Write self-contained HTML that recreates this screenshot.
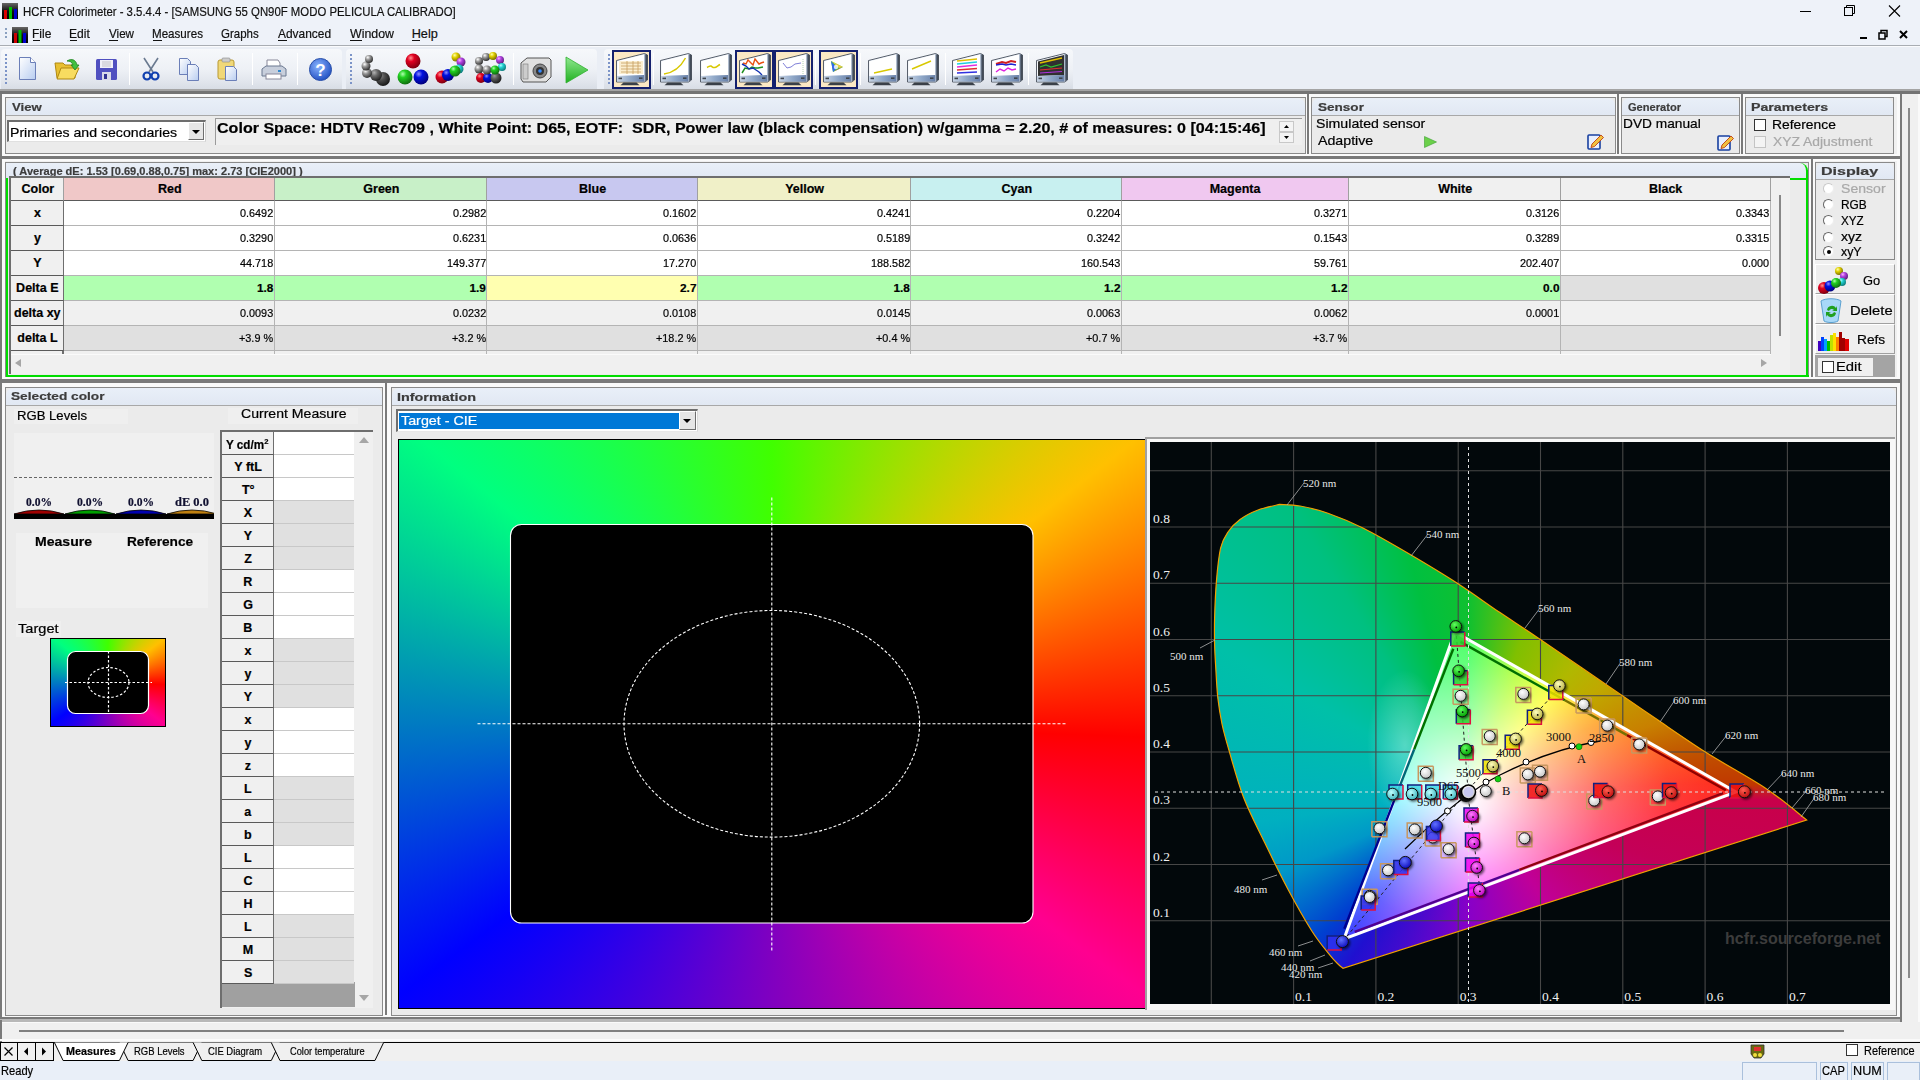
<!DOCTYPE html>
<html><head><meta charset="utf-8">
<style>
*{margin:0;padding:0;box-sizing:border-box}
html,body{width:1920px;height:1080px;overflow:hidden}
body{background:#f0f0f0;font-family:"Liberation Sans",sans-serif;font-size:12px;color:#000;position:relative}
.a{position:absolute}
.t{position:absolute;white-space:nowrap;line-height:1;-webkit-text-stroke:0.2px currentColor}
.ser{font-family:"Liberation Serif",serif}
.hdr{position:absolute;background:linear-gradient(#e9eff8,#e1e8f3);border-bottom:1px solid #a8a8a8;border-radius:7px 7px 0 0;font-weight:bold;color:#3a3a3a;font-size:11.5px}
.pan{position:absolute;border:1px solid #8a8a8a;background:#ebebeb}
.ico{position:absolute}
.sep{position:absolute;width:1px;background:#c5cad2;border-right:1px solid #fff}
</style></head><body>
<div class="a" style="left:0;top:0;width:1920px;height:46px;background:#eef2f9"></div>
<div class="a" style="left:0;top:46px;width:1920px;height:44px;background:#eaeef5;border-top:1px solid #fafbfd"></div>
<svg class="ico" style="left:2px;top:3px" width="17" height="17" viewBox="0 0 17 17"><defs><linearGradient id="tg" x1="0" y1="0" x2="0" y2="1"><stop offset="0" stop-color="#666"/><stop offset="0.5" stop-color="#111"/><stop offset="1" stop-color="#000"/></linearGradient></defs><rect x="0" y="0" width="16" height="16" fill="url(#tg)"/><rect x="2" y="7" width="3" height="9" fill="#d00"/><rect x="7" y="4" width="3" height="12" fill="#0b0"/><rect x="12" y="6" width="3" height="10" fill="#00c"/></svg>
<div class="t" style="left:22.84px;top:4.82px;font-size:13.2px;color:#111;transform:scaleX(0.8621);transform-origin:0 0">HCFR Colorimeter - 3.5.4.4 - [SAMSUNG 55 QN90F MODO PELICULA CALIBRADO]</div>
<svg class="ico" style="left:1798px;top:4px" width="110" height="14" viewBox="0 0 110 14"><path d="M2 7.5h11" stroke="#000" stroke-width="1"/><rect x="46.5" y="3.5" width="8" height="8" fill="none" stroke="#000"/><path d="M48.5 3.5v-2h8v8h-2" fill="none" stroke="#000"/><path d="M91 1.5l11 11M102 1.5l-11 11" stroke="#000" stroke-width="1.1"/></svg>
<div class="a" style="left:0;top:45px;width:1920px;height:1px;background:#a9adb3"></div>
<div class="a" style="left:5px;top:28px;width:2px;height:11px;background:repeating-linear-gradient(#8aa0c0 0 2px,transparent 2px 4px)"></div>
<svg class="ico" style="left:12px;top:27px" width="16" height="16" viewBox="0 0 16 16"><rect x="0" y="0" width="16" height="16" fill="url(#tg)"/><rect x="2" y="6" width="3" height="10" fill="#c00"/><rect x="6.5" y="3" width="3" height="13" fill="#0b0"/><rect x="11" y="6" width="3" height="10" fill="#00c"/></svg>
<div class="t" style="left:32.14px;top:28.24px;font-size:12.7px;color:#111;transform:scaleX(0.9459);transform-origin:0 0">File</div>
<div class="a" style="left:32.6px;top:40px;width:7.2px;height:1px;background:#111"></div>
<div class="t" style="left:69.03px;top:28.24px;font-size:12.7px;color:#111;transform:scaleX(0.9511);transform-origin:0 0">Edit</div>
<div class="a" style="left:69.5px;top:40px;width:7.9px;height:1px;background:#111"></div>
<div class="t" style="left:108.94px;top:28.24px;font-size:12.7px;color:#111;transform:scaleX(0.9177);transform-origin:0 0">View</div>
<div class="a" style="left:108.5px;top:40px;width:9.4px;height:1px;background:#111"></div>
<div class="t" style="left:152.17px;top:28.24px;font-size:12.7px;color:#111;transform:scaleX(0.9145);transform-origin:0 0">Measures</div>
<div class="a" style="left:152.6px;top:40px;width:9.5px;height:1px;background:#111"></div>
<div class="t" style="left:221.43px;top:28.24px;font-size:12.7px;color:#111;transform:scaleX(0.9045);transform-origin:0 0">Graphs</div>
<div class="a" style="left:221.5px;top:40px;width:9.3px;height:1px;background:#111"></div>
<div class="t" style="left:278.30px;top:28.24px;font-size:12.7px;color:#111;transform:scaleX(0.9409);transform-origin:0 0">Advanced</div>
<div class="a" style="left:277.8px;top:40px;width:9.4px;height:1px;background:#111"></div>
<div class="t" style="left:349.94px;top:28.24px;font-size:12.7px;color:#111;transform:scaleX(0.9746);transform-origin:0 0">Window</div>
<div class="a" style="left:349.5px;top:40px;width:12.9px;height:1px;background:#111"></div>
<div class="t" style="left:411.68px;top:28.24px;font-size:12.7px;color:#111">Help</div>
<div class="a" style="left:412.2px;top:40px;width:8.1px;height:1px;background:#111"></div>
<svg class="ico" style="left:1858px;top:29px" width="60" height="12" viewBox="0 0 60 12"><rect x="2" y="8" width="7" height="2" fill="#000"/><rect x="21" y="4" width="6" height="6" fill="none" stroke="#000" stroke-width="1.5"/><path d="M23 4v-2.5h6v6h-2" fill="none" stroke="#000" stroke-width="1.5"/><path d="M42 2l7 7M49 2l-7 7" stroke="#000" stroke-width="2"/></svg>
<div class="a" style="left:1px;top:49px;width:341px;height:40px;border-radius:4px 4px 0 0;background:linear-gradient(#f6f8fb,#eef1f6 50%,#e2e6ed 80%,#d8dde5)"></div>
<div class="a" style="left:346px;top:49px;width:251px;height:40px;border-radius:4px 4px 0 0;background:linear-gradient(#f6f8fb,#eef1f6 50%,#e2e6ed 80%,#d8dde5)"></div>
<div class="a" style="left:604px;top:49px;width:469px;height:40px;border-radius:4px 4px 0 0;background:linear-gradient(#f6f8fb,#eef1f6 50%,#e2e6ed 80%,#d8dde5)"></div>
<div class="a" style="left:5px;top:54px;width:2px;height:30px;background:repeating-linear-gradient(#7c94c8 0 2px,transparent 2px 4px)"></div>
<div class="a" style="left:350px;top:54px;width:2px;height:30px;background:repeating-linear-gradient(#7c94c8 0 2px,transparent 2px 4px)"></div>
<div class="a" style="left:608px;top:54px;width:2px;height:30px;background:repeating-linear-gradient(#7c94c8 0 2px,transparent 2px 4px)"></div>
<div class="sep" style="left:129px;top:53px;height:32px"></div>
<div class="sep" style="left:252px;top:53px;height:32px"></div>
<div class="sep" style="left:297px;top:53px;height:32px"></div>
<div class="sep" style="left:513px;top:53px;height:32px"></div>
<div class="sep" style="left:653px;top:53px;height:32px"></div>
<div class="sep" style="left:815px;top:53px;height:32px"></div>
<div class="sep" style="left:860px;top:53px;height:32px"></div>
<div class="sep" style="left:945px;top:53px;height:32px"></div>
<div class="sep" style="left:1028px;top:53px;height:32px"></div>
<div class="a" style="left:0;top:89px;width:1920px;height:2px;background:#a4a4a4"></div>
<div class="a" style="left:0;top:91px;width:1920px;height:3px;background:#747474"></div><svg width="0" height="0" style="position:absolute"><defs>
<radialGradient id="bR" cx="0.35" cy="0.3" r="0.7"><stop offset="0" stop-color="#ff9090"/><stop offset="0.35" stop-color="#e00020"/><stop offset="1" stop-color="#800010"/></radialGradient>
<radialGradient id="bG" cx="0.35" cy="0.3" r="0.7"><stop offset="0" stop-color="#b0ffb0"/><stop offset="0.35" stop-color="#20d020"/><stop offset="1" stop-color="#107010"/></radialGradient>
<radialGradient id="bB" cx="0.35" cy="0.3" r="0.7"><stop offset="0" stop-color="#9090ff"/><stop offset="0.35" stop-color="#0010e0"/><stop offset="1" stop-color="#000080"/></radialGradient>
<radialGradient id="bK" cx="0.35" cy="0.3" r="0.7"><stop offset="0" stop-color="#fff"/><stop offset="0.4" stop-color="#999"/><stop offset="1" stop-color="#333"/></radialGradient>
<radialGradient id="bY" cx="0.35" cy="0.3" r="0.7"><stop offset="0" stop-color="#ffffb0"/><stop offset="0.4" stop-color="#e0d000"/><stop offset="1" stop-color="#807000"/></radialGradient>
<radialGradient id="bM" cx="0.35" cy="0.3" r="0.7"><stop offset="0" stop-color="#ffb0ff"/><stop offset="0.4" stop-color="#b040e0"/><stop offset="1" stop-color="#602080"/></radialGradient>
<radialGradient id="bC" cx="0.35" cy="0.3" r="0.7"><stop offset="0" stop-color="#b0ffff"/><stop offset="0.4" stop-color="#20d0d0"/><stop offset="1" stop-color="#108080"/></radialGradient>
<linearGradient id="pg" x1="0" y1="0" x2="1" y2="1"><stop offset="0" stop-color="#fff"/><stop offset="1" stop-color="#b8cdf0"/></linearGradient>
<linearGradient id="mside" x1="0" y1="0" x2="1" y2="0"><stop offset="0" stop-color="#8090a8"/><stop offset="1" stop-color="#2a3038"/></linearGradient>
<linearGradient id="mbez" x1="0" y1="0" x2="1" y2="0"><stop offset="0" stop-color="#c8d4e4"/><stop offset="0.5" stop-color="#90a8c8"/><stop offset="1" stop-color="#6880a8"/></linearGradient>
</defs></svg>
<svg class="ico" style="left:18px;top:56px" width="20" height="25" viewBox="0 0 20 25"><path d="M1.5 1.5h11l5 5v17h-16z" fill="url(#pg)" stroke="#6b7fb8"/><path d="M12.5 1.5v5h5" fill="#fff" stroke="#6b7fb8"/></svg>
<svg class="ico" style="left:54px;top:57px" width="26" height="24" viewBox="0 0 26 24"><path d="M1 6h8l2 2h10v13H3z" fill="#e8c030" stroke="#b08810"/><path d="M3 22l4-11h18l-5 11z" fill="#f8dc60" stroke="#b08810"/><path d="M13 4c5-3 9-1 10 4l2 0-4 5-4-5h2c-1-3-3-4-6-4z" fill="#40c040" stroke="#208020" stroke-width="0.8"/></svg>
<svg class="ico" style="left:95px;top:58px" width="23" height="23" viewBox="0 0 23 23"><rect x="1" y="1" width="21" height="21" rx="1.5" fill="#5050c0"/><rect x="5" y="2" width="13" height="8" fill="#f0f0f8"/><path d="M7 4h9M7 6h9M7 8h9" stroke="#aaa" stroke-width="0.6"/><rect x="7" y="14" width="9" height="8" fill="#d8d8e8"/><rect x="9" y="16" width="3" height="5" fill="#303090"/></svg>
<svg class="ico" style="left:141px;top:57px" width="20" height="25" viewBox="0 0 20 25"><path d="M3 1l9 14M17 1L8 15" stroke="#6a7a90" stroke-width="1.6"/><circle cx="6" cy="19" r="3.5" fill="none" stroke="#1040b0" stroke-width="2.2"/><circle cx="14" cy="19" r="3.5" fill="none" stroke="#1040b0" stroke-width="2.2"/></svg>
<svg class="ico" style="left:178px;top:57px" width="24" height="25" viewBox="0 0 24 25"><path d="M1.5 1.5h8l3 3v13h-11z" fill="url(#pg)" stroke="#6b7fb8"/><path d="M9.5 7.5h8l3 3v13h-11z" fill="url(#pg)" stroke="#6b7fb8"/></svg>
<svg class="ico" style="left:216px;top:57px" width="24" height="25" viewBox="0 0 24 25"><rect x="2" y="3" width="16" height="19" rx="2" fill="#f0d878" stroke="#b89830"/><rect x="6" y="1" width="8" height="4" rx="1" fill="#ccc" stroke="#888" stroke-width="0.6"/><path d="M9.5 9.5h8l3 3v11h-11z" fill="url(#pg)" stroke="#6b7fb8"/></svg>
<svg class="ico" style="left:261px;top:59px" width="26" height="22" viewBox="0 0 26 22"><path d="M6 1h11l2 3v5H6z" fill="#fff" stroke="#889"/><path d="M1 10l4-3h16l4 3v7H1z" fill="#c8cfdc" stroke="#6b7890"/><rect x="5" y="15" width="15" height="5" fill="#fff" stroke="#889"/><rect x="17" y="11" width="3" height="2" fill="#38c"/></svg>
<svg class="ico" style="left:308px;top:57px" width="25" height="25" viewBox="0 0 25 25"><defs><radialGradient id="hg" cx="0.4" cy="0.35" r="0.7"><stop offset="0" stop-color="#8ab4ff"/><stop offset="1" stop-color="#1e4cc0"/></radialGradient></defs><circle cx="12.5" cy="12.5" r="11" fill="url(#hg)" stroke="#2a50a8"/><text x="12.5" y="18.5" text-anchor="middle" font-family="Liberation Sans" font-weight="bold" font-size="17" fill="#fff">?</text></svg>
<svg class="ico" style="left:357px;top:53px" width="34" height="34" viewBox="0 0 34 34"><circle cx="26" cy="26" r="7" fill="url(#bK)" style="filter:brightness(0.5)"/><circle cx="19" cy="22" r="6" fill="url(#bK)" style="filter:brightness(0.7)"/><circle cx="10" cy="20" r="5" fill="url(#bK)"/><circle cx="9" cy="13" r="4.5" fill="url(#bK)"/><circle cx="12" cy="6" r="4" fill="url(#bK)"/></svg>
<svg class="ico" style="left:396px;top:52px" width="34" height="34" viewBox="0 0 34 34"><circle cx="17" cy="9" r="7.5" fill="url(#bR)"/><circle cx="9" cy="25" r="7.5" fill="url(#bG)"/><circle cx="25" cy="25" r="7.5" fill="url(#bB)"/></svg>
<svg class="ico" style="left:435px;top:52px" width="34" height="34" viewBox="0 0 34 34"><circle cx="21" cy="5" r="4.5" fill="url(#bY)"/><circle cx="26" cy="10" r="4.5" fill="url(#bM)"/><circle cx="24" cy="17" r="4.5" fill="url(#bC)"/><circle cx="7" cy="25" r="6.5" fill="url(#bR)"/><circle cx="13" cy="23" r="6" fill="url(#bB)"/><circle cx="20" cy="19" r="5.5" fill="url(#bG)"/></svg>
<svg class="ico" style="left:474px;top:52px" width="34" height="34" viewBox="0 0 34 34"><circle cx="12" cy="5" r="4" fill="url(#bK)"/><circle cx="19" cy="4" r="4" fill="url(#bY)"/><circle cx="26" cy="8" r="4" fill="url(#bM)"/><circle cx="28" cy="15" r="4" fill="url(#bC)"/><circle cx="5" cy="9" r="4" fill="url(#bK)"/><circle cx="5" cy="17" r="4.5" fill="url(#bK)"/><circle cx="7" cy="26" r="5" fill="url(#bR)"/><circle cx="14" cy="26" r="5" fill="url(#bB)"/><circle cx="22" cy="26" r="5.5" fill="url(#bK)" style="filter:brightness(0.6)"/><circle cx="13" cy="18" r="4.5" fill="url(#bK)"/><circle cx="21" cy="18" r="4.5" fill="url(#bG)"/></svg>
<svg class="ico" style="left:519px;top:55px" width="34" height="30" viewBox="0 0 34 30"><path d="M2 8l6-5h22l2 2v17l-5 5H4l-2-3z" fill="#e0e0e0" stroke="#555" stroke-width="1"/><rect x="4" y="9" width="5" height="15" fill="#ccc" stroke="#777" stroke-width="0.6"/><circle cx="21" cy="16" r="7" fill="#888" stroke="#444"/><circle cx="21" cy="16" r="4" fill="#333"/><circle cx="21" cy="16" r="1.8" fill="#38f"/></svg>
<svg class="ico" style="left:564px;top:55px" width="26" height="30" viewBox="0 0 26 30"><defs><linearGradient id="pl" x1="0" y1="0" x2="0" y2="1"><stop offset="0" stop-color="#90e890"/><stop offset="1" stop-color="#20b020"/></linearGradient></defs><path d="M2 2l22 13L2 28z" fill="url(#pl)" stroke="#30b030" stroke-width="0.8"/></svg>
<div class="a" style="left:612px;top:50px;width:39px;height:39px;background:#fbe8c4;border:2px solid #14206e"></div>
<svg class="ico" style="left:614px;top:52px" width="35" height="34" viewBox="0 0 35 34"><path d="M2.5 8.5L30.5 1.5L33.5 3V28L30.5 30H2.5z" fill="#dfe6f0" stroke="#48505c" stroke-width="0.9"/><path d="M30.5 1.8L33.3 3.2V27.8L30.5 29.7z" fill="url(#mside)"/><path d="M3.3 9.2L30 2.6V23L3.3 24z" fill="#fff"/><rect x="5" y="9" width="24" height="13" fill="#fbeed0"/><g stroke="#c8a060" stroke-width="0.8"><path d="M7 11h20M7 14h20M7 17h20M7 20h20M13 9v13M19 9v13M24 9v13"/></g><path d="M3 24L30.2 23V29.6H3z" fill="url(#mbez)"/><rect x="4.5" y="25.6" width="3.5" height="1.6" fill="#40464e"/><rect x="25" y="25.4" width="3.5" height="1.6" fill="#40464e"/><path d="M6.5 33.3L9.5 30.5H22.5L25.5 33.3z" fill="#3a4048"/></svg>
<svg class="ico" style="left:658px;top:52px" width="35" height="34" viewBox="0 0 35 34"><path d="M2.5 8.5L30.5 1.5L33.5 3V28L30.5 30H2.5z" fill="#dfe6f0" stroke="#48505c" stroke-width="0.9"/><path d="M30.5 1.8L33.3 3.2V27.8L30.5 29.7z" fill="url(#mside)"/><path d="M3.3 9.2L30 2.6V23L3.3 24z" fill="#fff"/><path d="M6 22Q20 20 27.5 6" fill="none" stroke="#d8c800" stroke-width="1.5"/><path d="M3 24L30.2 23V29.6H3z" fill="url(#mbez)"/><rect x="4.5" y="25.6" width="3.5" height="1.6" fill="#40464e"/><rect x="25" y="25.4" width="3.5" height="1.6" fill="#40464e"/><path d="M6.5 33.3L9.5 30.5H22.5L25.5 33.3z" fill="#3a4048"/></svg>
<svg class="ico" style="left:698px;top:52px" width="35" height="34" viewBox="0 0 35 34"><path d="M2.5 8.5L30.5 1.5L33.5 3V28L30.5 30H2.5z" fill="#dfe6f0" stroke="#48505c" stroke-width="0.9"/><path d="M30.5 1.8L33.3 3.2V27.8L30.5 29.7z" fill="url(#mside)"/><path d="M3.3 9.2L30 2.6V23L3.3 24z" fill="#fff"/><path d="M9 15.5c2-1 3-2 4-1.5s2 2 4 1.5 3-2 5-3" fill="none" stroke="#d8c800" stroke-width="1.5"/><path d="M3 24L30.2 23V29.6H3z" fill="url(#mbez)"/><rect x="4.5" y="25.6" width="3.5" height="1.6" fill="#40464e"/><rect x="25" y="25.4" width="3.5" height="1.6" fill="#40464e"/><path d="M6.5 33.3L9.5 30.5H22.5L25.5 33.3z" fill="#3a4048"/></svg>
<div class="a" style="left:735px;top:50px;width:39px;height:39px;background:#fbe8c4;border:2px solid #14206e"></div>
<svg class="ico" style="left:737px;top:52px" width="35" height="34" viewBox="0 0 35 34"><path d="M2.5 8.5L30.5 1.5L33.5 3V28L30.5 30H2.5z" fill="#dfe6f0" stroke="#48505c" stroke-width="0.9"/><path d="M30.5 1.8L33.3 3.2V27.8L30.5 29.7z" fill="url(#mside)"/><path d="M3.3 9.2L30 2.6V23L3.3 24z" fill="#fff"/><path d="M6 11l3 1 2-4 3 3 2 2 2-6 4 5 2-1 3-1" fill="none" stroke="#e85010" stroke-width="1.4"/><path d="M5 21l3-5 4 1 3-2 3 1 3 0 5-1" fill="none" stroke="#209020" stroke-width="1.5"/><path d="M5 12l4 2 3 3 4-1 3 2 3 2 3 3" fill="none" stroke="#1030b0" stroke-width="1.4"/><path d="M3 24L30.2 23V29.6H3z" fill="url(#mbez)"/><rect x="4.5" y="25.6" width="3.5" height="1.6" fill="#40464e"/><rect x="25" y="25.4" width="3.5" height="1.6" fill="#40464e"/><path d="M6.5 33.3L9.5 30.5H22.5L25.5 33.3z" fill="#3a4048"/></svg>
<div class="a" style="left:774px;top:50px;width:39px;height:39px;background:#fbe8c4;border:2px solid #14206e"></div>
<svg class="ico" style="left:776px;top:52px" width="35" height="34" viewBox="0 0 35 34"><path d="M2.5 8.5L30.5 1.5L33.5 3V28L30.5 30H2.5z" fill="#dfe6f0" stroke="#48505c" stroke-width="0.9"/><path d="M30.5 1.8L33.3 3.2V27.8L30.5 29.7z" fill="url(#mside)"/><path d="M3.3 9.2L30 2.6V23L3.3 24z" fill="#fff"/><path d="M7 11l4 5 4-1 4-3 6-1" fill="none" stroke="#8080d8" stroke-width="1"/><path d="M27 7v15" stroke="#a0c8a0" stroke-width="0.8" stroke-dasharray="1 1"/><path d="M3 24L30.2 23V29.6H3z" fill="url(#mbez)"/><rect x="4.5" y="25.6" width="3.5" height="1.6" fill="#40464e"/><rect x="25" y="25.4" width="3.5" height="1.6" fill="#40464e"/><path d="M6.5 33.3L9.5 30.5H22.5L25.5 33.3z" fill="#3a4048"/></svg>
<div class="a" style="left:819px;top:50px;width:39px;height:39px;background:#fbe8c4;border:2px solid #14206e"></div>
<svg class="ico" style="left:821px;top:52px" width="35" height="34" viewBox="0 0 35 34"><path d="M2.5 8.5L30.5 1.5L33.5 3V28L30.5 30H2.5z" fill="#dfe6f0" stroke="#48505c" stroke-width="0.9"/><path d="M30.5 1.8L33.3 3.2V27.8L30.5 29.7z" fill="url(#mside)"/><path d="M3.3 9.2L30 2.6V23L3.3 24z" fill="#fff"/><path d="M10 9l12 6-10 5z" fill="#4c4"/><path d="M10 9l12 6-4 1z" fill="#ec4"/><path d="M12 20l10-5-5 2z" fill="#e33"/><path d="M10 9l2 11 4-4z" fill="#36e"/><circle cx="15" cy="15" r="2.2" fill="#fff" opacity="0.8"/><path d="M3 24L30.2 23V29.6H3z" fill="url(#mbez)"/><rect x="4.5" y="25.6" width="3.5" height="1.6" fill="#40464e"/><rect x="25" y="25.4" width="3.5" height="1.6" fill="#40464e"/><path d="M6.5 33.3L9.5 30.5H22.5L25.5 33.3z" fill="#3a4048"/></svg>
<svg class="ico" style="left:866px;top:52px" width="35" height="34" viewBox="0 0 35 34"><path d="M2.5 8.5L30.5 1.5L33.5 3V28L30.5 30H2.5z" fill="#dfe6f0" stroke="#48505c" stroke-width="0.9"/><path d="M30.5 1.8L33.3 3.2V27.8L30.5 29.7z" fill="url(#mside)"/><path d="M3.3 9.2L30 2.6V23L3.3 24z" fill="#fff"/><path d="M8 21l18-4" fill="none" stroke="#d8c800" stroke-width="1.4"/><path d="M3 24L30.2 23V29.6H3z" fill="url(#mbez)"/><rect x="4.5" y="25.6" width="3.5" height="1.6" fill="#40464e"/><rect x="25" y="25.4" width="3.5" height="1.6" fill="#40464e"/><path d="M6.5 33.3L9.5 30.5H22.5L25.5 33.3z" fill="#3a4048"/></svg>
<svg class="ico" style="left:905px;top:52px" width="35" height="34" viewBox="0 0 35 34"><path d="M2.5 8.5L30.5 1.5L33.5 3V28L30.5 30H2.5z" fill="#dfe6f0" stroke="#48505c" stroke-width="0.9"/><path d="M30.5 1.8L33.3 3.2V27.8L30.5 29.7z" fill="url(#mside)"/><path d="M3.3 9.2L30 2.6V23L3.3 24z" fill="#fff"/><path d="M7 17l19-8" fill="none" stroke="#d8c800" stroke-width="1.4"/><path d="M3 24L30.2 23V29.6H3z" fill="url(#mbez)"/><rect x="4.5" y="25.6" width="3.5" height="1.6" fill="#40464e"/><rect x="25" y="25.4" width="3.5" height="1.6" fill="#40464e"/><path d="M6.5 33.3L9.5 30.5H22.5L25.5 33.3z" fill="#3a4048"/></svg>
<svg class="ico" style="left:950px;top:52px" width="35" height="34" viewBox="0 0 35 34"><path d="M2.5 8.5L30.5 1.5L33.5 3V28L30.5 30H2.5z" fill="#dfe6f0" stroke="#48505c" stroke-width="0.9"/><path d="M30.5 1.8L33.3 3.2V27.8L30.5 29.7z" fill="url(#mside)"/><path d="M3.3 9.2L30 2.6V23L3.3 24z" fill="#fff"/><path d="M7 9l20-2" stroke="#e0c000" stroke-width="1.3"/><path d="M7 12l20-2" stroke="#20d0e0" stroke-width="1.3"/><path d="M7 15l20-2" stroke="#e030e0" stroke-width="1.3"/><path d="M7 18l20-1.5" stroke="#e03030" stroke-width="1.3"/><path d="M7 21l20-1" stroke="#3030e0" stroke-width="1.3"/><path d="M3 24L30.2 23V29.6H3z" fill="url(#mbez)"/><rect x="4.5" y="25.6" width="3.5" height="1.6" fill="#40464e"/><rect x="25" y="25.4" width="3.5" height="1.6" fill="#40464e"/><path d="M6.5 33.3L9.5 30.5H22.5L25.5 33.3z" fill="#3a4048"/></svg>
<svg class="ico" style="left:989px;top:52px" width="35" height="34" viewBox="0 0 35 34"><path d="M2.5 8.5L30.5 1.5L33.5 3V28L30.5 30H2.5z" fill="#dfe6f0" stroke="#48505c" stroke-width="0.9"/><path d="M30.5 1.8L33.3 3.2V27.8L30.5 29.7z" fill="url(#mside)"/><path d="M3.3 9.2L30 2.6V23L3.3 24z" fill="#fff"/><path d="M7 12l6-2 4 1 5-2 5 1" fill="none" stroke="#d02020" stroke-width="2"/><path d="M7 13l6-1 4 1 5-1 5 1" fill="none" stroke="#2020d0" stroke-width="1.3"/><path d="M7 20l4-3 4 2 4-3 4 2 4-1" fill="none" stroke="#e020e0" stroke-width="1.4"/><path d="M3 24L30.2 23V29.6H3z" fill="url(#mbez)"/><rect x="4.5" y="25.6" width="3.5" height="1.6" fill="#40464e"/><rect x="25" y="25.4" width="3.5" height="1.6" fill="#40464e"/><path d="M6.5 33.3L9.5 30.5H22.5L25.5 33.3z" fill="#3a4048"/></svg>
<svg class="ico" style="left:1034px;top:52px" width="35" height="34" viewBox="0 0 35 34"><path d="M2.5 8.5L30.5 1.5L33.5 3V28L30.5 30H2.5z" fill="#dfe6f0" stroke="#48505c" stroke-width="0.9"/><path d="M30.5 1.8L33.3 3.2V27.8L30.5 29.7z" fill="url(#mside)"/><path d="M3.3 9.2L30 2.6V23L3.3 24z" fill="#fff"/><path d="M4 9.5L30 3V23L4 24z" fill="#303030"/><path d="M6 11l22-5" stroke="#e0c000" stroke-width="1.3"/><path d="M6 15l6-2 5 2 11-3" fill="none" stroke="#30c030" stroke-width="1.2"/><path d="M6 18l22-2" stroke="#e03030" stroke-width="1.1"/><path d="M6 21l22-1.5" stroke="#b030e0" stroke-width="1.1"/><path d="M3 24L30.2 23V29.6H3z" fill="url(#mbez)"/><rect x="4.5" y="25.6" width="3.5" height="1.6" fill="#40464e"/><rect x="25" y="25.4" width="3.5" height="1.6" fill="#40464e"/><path d="M6.5 33.3L9.5 30.5H22.5L25.5 33.3z" fill="#3a4048"/></svg><div class="a" style="left:0;top:94px;width:2px;height:948px;background:#7a7a7a"></div>
<div class="a" style="left:2px;top:94px;width:3px;height:926px;background:#fafafa"></div>
<div class="a" style="left:1897px;top:94px;width:23px;height:926px;background:#f0f0f0"></div>
<div class="a" style="left:1899px;top:94px;width:3px;height:928px;background:#7a7a7a"></div>
<div class="a" style="left:1897px;top:94px;width:3px;height:926px;background:#fafafa"></div>
<div class="a" style="left:1908px;top:108px;width:2px;height:870px;background:#8a8a8a"></div>
<div class="a" style="left:1918px;top:94px;width:2px;height:947px;background:#fafafa"></div>
<div class="a" style="left:2px;top:94px;width:1898px;height:3px;background:#fafafa"></div>
<div class="pan" style="left:5px;top:97px;width:1301px;height:57px"></div>
<div class="hdr" style="left:6px;top:98px;width:1299px;height:18px"></div>
<div class="t" style="left:11.93px;top:102.23px;font-size:11.3px;font-weight:bold;color:#3c3c3c;transform:scaleX(1.1630);transform-origin:0 0">View</div>
<div class="a" style="left:7px;top:120px;width:199px;height:22px;background:#fff;border-top:2px solid #6e6e6e;border-left:2px solid #6e6e6e;border-right:1px solid #d0d0d0;border-bottom:1px solid #e0e0e0"></div>
<div class="t" style="left:9.87px;top:127.06px;font-size:12.8px;color:#000;transform:scaleX(1.1027);transform-origin:0 0">Primaries and secondaries</div>
<div class="a" style="left:188px;top:122px;width:16px;height:18px;background:#e6e6e6;border:1px solid;border-color:#fff #6e6e6e #6e6e6e #fff"></div>
<svg class="ico" style="left:192px;top:130px" width="9" height="5"><path d="M0 0h8l-4 4z" fill="#000"/></svg>
<div class="a" style="left:215px;top:118px;width:1087px;height:27px;background:#efefef;border-top:1px solid #9a9a9a;border-left:1px solid #9a9a9a"></div>
<div class="t" style="left:216.96px;top:119.91px;font-size:15.1px;font-weight:bold;color:#000;transform:scaleX(1.0643);transform-origin:0 0">Color Space: HDTV Rec709 , White Point: D65, EOTF:&nbsp; SDR, Power law (black compensation) w/gamma = 2.20, # of measures: 0 [04:15:46]</div>
<svg class="ico" style="left:1279px;top:121px" width="15" height="22"><rect x="0.5" y="0.5" width="14" height="10" fill="#f4f4f4" stroke="#c8c8c8"/><rect x="0.5" y="11.5" width="14" height="10" fill="#f4f4f4" stroke="#c8c8c8"/><path d="M5 7h5l-2.5-3z" fill="#000"/><path d="M5 15h5l-2.5 3z" fill="#000"/></svg>
<div class="a" style="left:1306px;top:94px;width:5px;height:63px;background:#fafafa"></div>
<div class="a" style="left:1307px;top:94px;width:2px;height:63px;background:#7a7a7a"></div>
<div class="a" style="left:1616px;top:94px;width:5px;height:63px;background:#fafafa"></div>
<div class="a" style="left:1617px;top:94px;width:2px;height:63px;background:#7a7a7a"></div>
<div class="a" style="left:1740px;top:94px;width:5px;height:63px;background:#fafafa"></div>
<div class="a" style="left:1741px;top:94px;width:2px;height:63px;background:#7a7a7a"></div>
<div class="pan" style="left:1311px;top:97px;width:305px;height:57px"></div>
<div class="hdr" style="left:1312px;top:98px;width:303px;height:18px"></div>
<div class="t" style="left:1317.59px;top:102.23px;font-size:11.3px;font-weight:bold;color:#3c3c3c;transform:scaleX(1.1985);transform-origin:0 0">Sensor</div>
<div class="t" style="left:1315.66px;top:118.07px;font-size:12.9px;transform:scaleX(1.0976);transform-origin:0 0">Simulated sensor</div>
<div class="t" style="left:1317.90px;top:134.87px;font-size:12.9px;transform:scaleX(1.1014);transform-origin:0 0">Adaptive</div>
<svg class="ico" style="left:1424px;top:136px" width="13" height="12"><path d="M0.5 0.5l12 5.5-12 5.5z" fill="#6bd04a" stroke="#3aa030" stroke-width="0.6"/></svg>
<svg class="ico" style="left:1586px;top:131px" width="20" height="20" viewBox="0 0 20 20"><rect x="2" y="4" width="12" height="14" rx="1" fill="#e8efff" stroke="#1840a0" stroke-width="1.6"/><path d="M6 13l9-9 2.5 2.5-9 9-3.5 1z" fill="#f0c040" stroke="#c04010" stroke-width="0.9"/></svg>
<div class="pan" style="left:1621px;top:97px;width:119px;height:57px"></div>
<div class="hdr" style="left:1622px;top:98px;width:117px;height:18px"></div>
<div class="t" style="left:1627.56px;top:102.23px;font-size:11.3px;font-weight:bold;color:#3c3c3c;transform:scaleX(0.9814);transform-origin:0 0">Generator</div>
<div class="t" style="left:1622.80px;top:118.07px;font-size:12.9px;transform:scaleX(1.0631);transform-origin:0 0">DVD manual</div>
<svg class="ico" style="left:1716px;top:132px" width="20" height="20" viewBox="0 0 20 20"><rect x="2" y="4" width="12" height="14" rx="1" fill="#e8efff" stroke="#1840a0" stroke-width="1.6"/><path d="M6 13l9-9 2.5 2.5-9 9-3.5 1z" fill="#f0c040" stroke="#c04010" stroke-width="0.9"/></svg>
<div class="pan" style="left:1745px;top:97px;width:149px;height:57px"></div>
<div class="hdr" style="left:1746px;top:98px;width:147px;height:18px"></div>
<div class="t" style="left:1751.08px;top:102.23px;font-size:11.3px;font-weight:bold;color:#3c3c3c;transform:scaleX(1.2545);transform-origin:0 0">Parameters</div>
<div class="a" style="left:1754px;top:119px;width:12px;height:12px;background:#fff;border:1px solid #333"></div>
<div class="t" style="left:1771.79px;top:118.57px;font-size:12.9px;transform:scaleX(1.0744);transform-origin:0 0">Reference</div>
<div class="a" style="left:1754px;top:136px;width:12px;height:12px;background:#f4f4f4;border:1px solid #c4c4c4"></div>
<div class="t" style="left:1772.55px;top:135.57px;font-size:12.9px;color:#a8a8a8;transform:scaleX(1.0756);transform-origin:0 0">XYZ Adjustment</div>
<div class="a" style="left:2px;top:154px;width:1898px;height:3px;background:#fafafa"></div>
<div class="a" style="left:0;top:156px;width:1900px;height:3px;background:#787878"></div>
<div class="a" style="left:2px;top:159px;width:1898px;height:2px;background:#fafafa"></div><div class="pan" style="left:5px;top:162px;width:1804px;height:216px;background:#ebebeb;border-color:#8a8a8a"></div>
<div class="hdr" style="left:6px;top:163px;width:1802px;height:15px;border-bottom:none;border-right:2px solid #0d0;border-radius:0 8px 0 0"></div>
<div class="t" style="left:13.35px;top:166.15px;font-size:10.8px;font-weight:bold;color:#3c3c3c;transform:scaleX(1.0234);transform-origin:0 0">( Average dE: 1.53 [0.69,0.88,0.75] max: 2.73 [CIE2000] )</div>
<div class="a" style="left:6px;top:178px;width:2px;height:199px;background:#00dd00"></div>
<div class="a" style="left:6px;top:375px;width:1803px;height:2px;background:#00dd00"></div>
<div class="a" style="left:1806px;top:170px;width:2px;height:207px;background:#00dd00"></div>
<div class="a" style="left:1790px;top:178px;width:17px;height:2px;background:#00dd00"></div>
<div class="a" style="left:9px;top:176px;width:1781px;height:198px;background:#f0f0f0;border-top:2px solid #6e6e6e;border-left:2px solid #6e6e6e"></div>
<div class="a" style="left:11px;top:178px;width:53px;height:23px;background:#f0f0f0;border-right:1px solid #a0a0a0;border-bottom:1.5px solid #5a5a5a"></div>
<div class="t" style="left:21.53px;top:183.41px;font-size:12.5px;font-weight:bold;color:#000">Color</div>
<div class="a" style="left:64px;top:178px;width:210.5px;height:23px;background:#f0c8c8;border-right:1px solid #a0a0a0;border-bottom:1.5px solid #5a5a5a"></div>
<div class="t" style="left:157.94px;top:183.41px;font-size:12.5px;font-weight:bold;color:#000">Red</div>
<div class="a" style="left:274.5px;top:178px;width:212.5px;height:23px;background:#c8f0c8;border-right:1px solid #a0a0a0;border-bottom:1.5px solid #5a5a5a"></div>
<div class="t" style="left:363.31px;top:183.41px;font-size:12.5px;font-weight:bold;color:#000">Green</div>
<div class="a" style="left:487px;top:178px;width:210.5px;height:23px;background:#c8c8f0;border-right:1px solid #a0a0a0;border-bottom:1.5px solid #5a5a5a"></div>
<div class="t" style="left:579.00px;top:183.41px;font-size:12.5px;font-weight:bold;color:#000">Blue</div>
<div class="a" style="left:697.5px;top:178px;width:213.5px;height:23px;background:#f0f0c8;border-right:1px solid #a0a0a0;border-bottom:1.5px solid #5a5a5a"></div>
<div class="t" style="left:785.19px;top:183.41px;font-size:12.5px;font-weight:bold;color:#000">Yellow</div>
<div class="a" style="left:911px;top:178px;width:210.5px;height:23px;background:#c8f0f0;border-right:1px solid #a0a0a0;border-bottom:1.5px solid #5a5a5a"></div>
<div class="t" style="left:1001.59px;top:183.41px;font-size:12.5px;font-weight:bold;color:#000">Cyan</div>
<div class="a" style="left:1121.5px;top:178px;width:227.0px;height:23px;background:#f0c8f0;border-right:1px solid #a0a0a0;border-bottom:1.5px solid #5a5a5a"></div>
<div class="t" style="left:1209.69px;top:183.41px;font-size:12.5px;font-weight:bold;color:#000">Magenta</div>
<div class="a" style="left:1348.5px;top:178px;width:212.0px;height:23px;background:#f0f0f0;border-right:1px solid #a0a0a0;border-bottom:1.5px solid #5a5a5a"></div>
<div class="t" style="left:1438.19px;top:183.41px;font-size:12.5px;font-weight:bold;color:#000">White</div>
<div class="a" style="left:1560.5px;top:178px;width:210.0px;height:23px;background:#f0f0f0;border-right:1px solid #a0a0a0;border-bottom:1.5px solid #5a5a5a"></div>
<div class="t" style="left:1648.94px;top:183.41px;font-size:12.5px;font-weight:bold;color:#000">Black</div>
<div class="a" style="left:11px;top:200.5px;width:53px;height:25.0px;background:#f0f0f0;border-right:1.5px solid #6e6e6e;border-bottom:1.5px solid #5a5a5a"></div>
<div class="t" style="left:34.03px;top:207.21px;font-size:12.5px;font-weight:bold;color:#000">x</div>
<div class="a" style="left:64px;top:200.5px;width:210.5px;height:25.0px;background:#ffffff;border-right:1px solid #b4b4b4;border-bottom:1px solid #b4b4b4"></div>
<div class="t" style="left:240.32px;top:208.31px;font-size:11.8px;color:#000;transform:scaleX(0.9200);transform-origin:0 0">0.6492</div>
<div class="a" style="left:274.5px;top:200.5px;width:212.5px;height:25.0px;background:#ffffff;border-right:1px solid #b4b4b4;border-bottom:1px solid #b4b4b4"></div>
<div class="t" style="left:452.82px;top:208.31px;font-size:11.8px;color:#000;transform:scaleX(0.9200);transform-origin:0 0">0.2982</div>
<div class="a" style="left:487px;top:200.5px;width:210.5px;height:25.0px;background:#ffffff;border-right:1px solid #b4b4b4;border-bottom:1px solid #b4b4b4"></div>
<div class="t" style="left:663.32px;top:208.31px;font-size:11.8px;color:#000;transform:scaleX(0.9200);transform-origin:0 0">0.1602</div>
<div class="a" style="left:697.5px;top:200.5px;width:213.5px;height:25.0px;background:#ffffff;border-right:1px solid #b4b4b4;border-bottom:1px solid #b4b4b4"></div>
<div class="t" style="left:876.77px;top:208.31px;font-size:11.8px;color:#000;transform:scaleX(0.9200);transform-origin:0 0">0.4241</div>
<div class="a" style="left:911px;top:200.5px;width:210.5px;height:25.0px;background:#ffffff;border-right:1px solid #b4b4b4;border-bottom:1px solid #b4b4b4"></div>
<div class="t" style="left:1087.05px;top:208.31px;font-size:11.8px;color:#000;transform:scaleX(0.9200);transform-origin:0 0">0.2204</div>
<div class="a" style="left:1121.5px;top:200.5px;width:227.0px;height:25.0px;background:#ffffff;border-right:1px solid #b4b4b4;border-bottom:1px solid #b4b4b4"></div>
<div class="t" style="left:1314.27px;top:208.31px;font-size:11.8px;color:#000;transform:scaleX(0.9200);transform-origin:0 0">0.3271</div>
<div class="a" style="left:1348.5px;top:200.5px;width:212.0px;height:25.0px;background:#ffffff;border-right:1px solid #b4b4b4;border-bottom:1px solid #b4b4b4"></div>
<div class="t" style="left:1526.21px;top:208.31px;font-size:11.8px;color:#000;transform:scaleX(0.9200);transform-origin:0 0">0.3126</div>
<div class="a" style="left:1560.5px;top:200.5px;width:210.0px;height:25.0px;background:#ffffff;border-right:1px solid #b4b4b4;border-bottom:1px solid #b4b4b4"></div>
<div class="t" style="left:1736.21px;top:208.31px;font-size:11.8px;color:#000;transform:scaleX(0.9200);transform-origin:0 0">0.3343</div>
<div class="a" style="left:11px;top:225.5px;width:53px;height:25.0px;background:#f0f0f0;border-right:1.5px solid #6e6e6e;border-bottom:1.5px solid #5a5a5a"></div>
<div class="t" style="left:34.03px;top:232.21px;font-size:12.5px;font-weight:bold;color:#000">y</div>
<div class="a" style="left:64px;top:225.5px;width:210.5px;height:25.0px;background:#ffffff;border-right:1px solid #b4b4b4;border-bottom:1px solid #b4b4b4"></div>
<div class="t" style="left:240.16px;top:233.31px;font-size:11.8px;color:#000;transform:scaleX(0.9200);transform-origin:0 0">0.3290</div>
<div class="a" style="left:274.5px;top:225.5px;width:212.5px;height:25.0px;background:#ffffff;border-right:1px solid #b4b4b4;border-bottom:1px solid #b4b4b4"></div>
<div class="t" style="left:452.77px;top:233.31px;font-size:11.8px;color:#000;transform:scaleX(0.9200);transform-origin:0 0">0.6231</div>
<div class="a" style="left:487px;top:225.5px;width:210.5px;height:25.0px;background:#ffffff;border-right:1px solid #b4b4b4;border-bottom:1px solid #b4b4b4"></div>
<div class="t" style="left:663.21px;top:233.31px;font-size:11.8px;color:#000;transform:scaleX(0.9200);transform-origin:0 0">0.0636</div>
<div class="a" style="left:697.5px;top:225.5px;width:213.5px;height:25.0px;background:#ffffff;border-right:1px solid #b4b4b4;border-bottom:1px solid #b4b4b4"></div>
<div class="t" style="left:876.77px;top:233.31px;font-size:11.8px;color:#000;transform:scaleX(0.9200);transform-origin:0 0">0.5189</div>
<div class="a" style="left:911px;top:225.5px;width:210.5px;height:25.0px;background:#ffffff;border-right:1px solid #b4b4b4;border-bottom:1px solid #b4b4b4"></div>
<div class="t" style="left:1087.32px;top:233.31px;font-size:11.8px;color:#000;transform:scaleX(0.9200);transform-origin:0 0">0.3242</div>
<div class="a" style="left:1121.5px;top:225.5px;width:227.0px;height:25.0px;background:#ffffff;border-right:1px solid #b4b4b4;border-bottom:1px solid #b4b4b4"></div>
<div class="t" style="left:1314.21px;top:233.31px;font-size:11.8px;color:#000;transform:scaleX(0.9200);transform-origin:0 0">0.1543</div>
<div class="a" style="left:1348.5px;top:225.5px;width:212.0px;height:25.0px;background:#ffffff;border-right:1px solid #b4b4b4;border-bottom:1px solid #b4b4b4"></div>
<div class="t" style="left:1526.27px;top:233.31px;font-size:11.8px;color:#000;transform:scaleX(0.9200);transform-origin:0 0">0.3289</div>
<div class="a" style="left:1560.5px;top:225.5px;width:210.0px;height:25.0px;background:#ffffff;border-right:1px solid #b4b4b4;border-bottom:1px solid #b4b4b4"></div>
<div class="t" style="left:1736.21px;top:233.31px;font-size:11.8px;color:#000;transform:scaleX(0.9200);transform-origin:0 0">0.3315</div>
<div class="a" style="left:11px;top:250.5px;width:53px;height:25.0px;background:#f0f0f0;border-right:1.5px solid #6e6e6e;border-bottom:1.5px solid #5a5a5a"></div>
<div class="t" style="left:33.34px;top:257.21px;font-size:12.5px;font-weight:bold;color:#000">Y</div>
<div class="a" style="left:64px;top:250.5px;width:210.5px;height:25.0px;background:#ffffff;border-right:1px solid #b4b4b4;border-bottom:1px solid #b4b4b4"></div>
<div class="t" style="left:240.21px;top:258.31px;font-size:11.8px;color:#000;transform:scaleX(0.9200);transform-origin:0 0">44.718</div>
<div class="a" style="left:274.5px;top:250.5px;width:212.5px;height:25.0px;background:#ffffff;border-right:1px solid #b4b4b4;border-bottom:1px solid #b4b4b4"></div>
<div class="t" style="left:446.80px;top:258.31px;font-size:11.8px;color:#000;transform:scaleX(0.9200);transform-origin:0 0">149.377</div>
<div class="a" style="left:487px;top:250.5px;width:210.5px;height:25.0px;background:#ffffff;border-right:1px solid #b4b4b4;border-bottom:1px solid #b4b4b4"></div>
<div class="t" style="left:663.16px;top:258.31px;font-size:11.8px;color:#000;transform:scaleX(0.9200);transform-origin:0 0">17.270</div>
<div class="a" style="left:697.5px;top:250.5px;width:213.5px;height:25.0px;background:#ffffff;border-right:1px solid #b4b4b4;border-bottom:1px solid #b4b4b4"></div>
<div class="t" style="left:870.80px;top:258.31px;font-size:11.8px;color:#000;transform:scaleX(0.9200);transform-origin:0 0">188.582</div>
<div class="a" style="left:911px;top:250.5px;width:210.5px;height:25.0px;background:#ffffff;border-right:1px solid #b4b4b4;border-bottom:1px solid #b4b4b4"></div>
<div class="t" style="left:1081.19px;top:258.31px;font-size:11.8px;color:#000;transform:scaleX(0.9200);transform-origin:0 0">160.543</div>
<div class="a" style="left:1121.5px;top:250.5px;width:227.0px;height:25.0px;background:#ffffff;border-right:1px solid #b4b4b4;border-bottom:1px solid #b4b4b4"></div>
<div class="t" style="left:1314.27px;top:258.31px;font-size:11.8px;color:#000;transform:scaleX(0.9200);transform-origin:0 0">59.761</div>
<div class="a" style="left:1348.5px;top:250.5px;width:212.0px;height:25.0px;background:#ffffff;border-right:1px solid #b4b4b4;border-bottom:1px solid #b4b4b4"></div>
<div class="t" style="left:1520.30px;top:258.31px;font-size:11.8px;color:#000;transform:scaleX(0.9200);transform-origin:0 0">202.407</div>
<div class="a" style="left:1560.5px;top:250.5px;width:210.0px;height:25.0px;background:#ffffff;border-right:1px solid #b4b4b4;border-bottom:1px solid #b4b4b4"></div>
<div class="t" style="left:1742.24px;top:258.31px;font-size:11.8px;color:#000;transform:scaleX(0.9200);transform-origin:0 0">0.000</div>
<div class="a" style="left:11px;top:275.5px;width:53px;height:25.0px;background:#f0f0f0;border-right:1.5px solid #6e6e6e;border-bottom:1.5px solid #5a5a5a"></div>
<div class="t" style="left:16.12px;top:282.21px;font-size:12.5px;font-weight:bold;color:#000">Delta E</div>
<div class="a" style="left:64px;top:275.5px;width:210.5px;height:25.0px;background:#b0ffb0;border-right:1px solid #b4b4b4;border-bottom:1px solid #b4b4b4"></div>
<div class="t" style="left:256.95px;top:283.31px;font-size:11.8px;font-weight:bold;color:#000">1.8</div>
<div class="a" style="left:274.5px;top:275.5px;width:212.5px;height:25.0px;background:#b0ffb0;border-right:1px solid #b4b4b4;border-bottom:1px solid #b4b4b4"></div>
<div class="t" style="left:469.51px;top:283.31px;font-size:11.8px;font-weight:bold;color:#000">1.9</div>
<div class="a" style="left:487px;top:275.5px;width:210.5px;height:25.0px;background:#ffffb0;border-right:1px solid #b4b4b4;border-bottom:1px solid #b4b4b4"></div>
<div class="t" style="left:680.07px;top:283.31px;font-size:11.8px;font-weight:bold;color:#000">2.7</div>
<div class="a" style="left:697.5px;top:275.5px;width:213.5px;height:25.0px;background:#b0ffb0;border-right:1px solid #b4b4b4;border-bottom:1px solid #b4b4b4"></div>
<div class="t" style="left:893.45px;top:283.31px;font-size:11.8px;font-weight:bold;color:#000">1.8</div>
<div class="a" style="left:911px;top:275.5px;width:210.5px;height:25.0px;background:#b0ffb0;border-right:1px solid #b4b4b4;border-bottom:1px solid #b4b4b4"></div>
<div class="t" style="left:1104.07px;top:283.31px;font-size:11.8px;font-weight:bold;color:#000">1.2</div>
<div class="a" style="left:1121.5px;top:275.5px;width:227.0px;height:25.0px;background:#b0ffb0;border-right:1px solid #b4b4b4;border-bottom:1px solid #b4b4b4"></div>
<div class="t" style="left:1331.07px;top:283.31px;font-size:11.8px;font-weight:bold;color:#000">1.2</div>
<div class="a" style="left:1348.5px;top:275.5px;width:212.0px;height:25.0px;background:#b0ffb0;border-right:1px solid #b4b4b4;border-bottom:1px solid #b4b4b4"></div>
<div class="t" style="left:1543.07px;top:283.31px;font-size:11.8px;font-weight:bold;color:#000">0.0</div>
<div class="a" style="left:1560.5px;top:275.5px;width:210.0px;height:25.0px;background:#e0e0e0;border-right:1px solid #b4b4b4;border-bottom:1px solid #b4b4b4"></div>
<div class="a" style="left:11px;top:300.5px;width:53px;height:25.0px;background:#f0f0f0;border-right:1.5px solid #6e6e6e;border-bottom:1.5px solid #5a5a5a"></div>
<div class="t" style="left:14.00px;top:307.21px;font-size:12.5px;font-weight:bold;color:#000">delta xy</div>
<div class="a" style="left:64px;top:300.5px;width:210.5px;height:25.0px;background:#f0f0f0;border-right:1px solid #b4b4b4;border-bottom:1px solid #b4b4b4"></div>
<div class="t" style="left:240.21px;top:308.31px;font-size:11.8px;color:#000;transform:scaleX(0.9200);transform-origin:0 0">0.0093</div>
<div class="a" style="left:274.5px;top:300.5px;width:212.5px;height:25.0px;background:#f0f0f0;border-right:1px solid #b4b4b4;border-bottom:1px solid #b4b4b4"></div>
<div class="t" style="left:452.82px;top:308.31px;font-size:11.8px;color:#000;transform:scaleX(0.9200);transform-origin:0 0">0.0232</div>
<div class="a" style="left:487px;top:300.5px;width:210.5px;height:25.0px;background:#f0f0f0;border-right:1px solid #b4b4b4;border-bottom:1px solid #b4b4b4"></div>
<div class="t" style="left:663.21px;top:308.31px;font-size:11.8px;color:#000;transform:scaleX(0.9200);transform-origin:0 0">0.0108</div>
<div class="a" style="left:697.5px;top:300.5px;width:213.5px;height:25.0px;background:#f0f0f0;border-right:1px solid #b4b4b4;border-bottom:1px solid #b4b4b4"></div>
<div class="t" style="left:876.71px;top:308.31px;font-size:11.8px;color:#000;transform:scaleX(0.9200);transform-origin:0 0">0.0145</div>
<div class="a" style="left:911px;top:300.5px;width:210.5px;height:25.0px;background:#f0f0f0;border-right:1px solid #b4b4b4;border-bottom:1px solid #b4b4b4"></div>
<div class="t" style="left:1087.21px;top:308.31px;font-size:11.8px;color:#000;transform:scaleX(0.9200);transform-origin:0 0">0.0063</div>
<div class="a" style="left:1121.5px;top:300.5px;width:227.0px;height:25.0px;background:#f0f0f0;border-right:1px solid #b4b4b4;border-bottom:1px solid #b4b4b4"></div>
<div class="t" style="left:1314.32px;top:308.31px;font-size:11.8px;color:#000;transform:scaleX(0.9200);transform-origin:0 0">0.0062</div>
<div class="a" style="left:1348.5px;top:300.5px;width:212.0px;height:25.0px;background:#f0f0f0;border-right:1px solid #b4b4b4;border-bottom:1px solid #b4b4b4"></div>
<div class="t" style="left:1526.27px;top:308.31px;font-size:11.8px;color:#000;transform:scaleX(0.9200);transform-origin:0 0">0.0001</div>
<div class="a" style="left:1560.5px;top:300.5px;width:210.0px;height:25.0px;background:#f0f0f0;border-right:1px solid #b4b4b4;border-bottom:1px solid #b4b4b4"></div>
<div class="a" style="left:11px;top:325.5px;width:53px;height:25.0px;background:#f0f0f0;border-right:1.5px solid #6e6e6e;border-bottom:1.5px solid #5a5a5a"></div>
<div class="t" style="left:17.31px;top:332.21px;font-size:12.5px;font-weight:bold;color:#000">delta L</div>
<div class="a" style="left:64px;top:325.5px;width:210.5px;height:25.0px;background:#e0e0e0;border-right:1px solid #b4b4b4;border-bottom:1px solid #b4b4b4"></div>
<div class="t" style="left:239.29px;top:333.31px;font-size:11.8px;color:#000;transform:scaleX(0.9200);transform-origin:0 0">+3.9 %</div>
<div class="a" style="left:274.5px;top:325.5px;width:212.5px;height:25.0px;background:#e0e0e0;border-right:1px solid #b4b4b4;border-bottom:1px solid #b4b4b4"></div>
<div class="t" style="left:451.79px;top:333.31px;font-size:11.8px;color:#000;transform:scaleX(0.9200);transform-origin:0 0">+3.2 %</div>
<div class="a" style="left:487px;top:325.5px;width:210.5px;height:25.0px;background:#e0e0e0;border-right:1px solid #b4b4b4;border-bottom:1px solid #b4b4b4"></div>
<div class="t" style="left:656.21px;top:333.31px;font-size:11.8px;color:#000;transform:scaleX(0.9200);transform-origin:0 0">+18.2 %</div>
<div class="a" style="left:697.5px;top:325.5px;width:213.5px;height:25.0px;background:#e0e0e0;border-right:1px solid #b4b4b4;border-bottom:1px solid #b4b4b4"></div>
<div class="t" style="left:875.79px;top:333.31px;font-size:11.8px;color:#000;transform:scaleX(0.9200);transform-origin:0 0">+0.4 %</div>
<div class="a" style="left:911px;top:325.5px;width:210.5px;height:25.0px;background:#e0e0e0;border-right:1px solid #b4b4b4;border-bottom:1px solid #b4b4b4"></div>
<div class="t" style="left:1086.29px;top:333.31px;font-size:11.8px;color:#000;transform:scaleX(0.9200);transform-origin:0 0">+0.7 %</div>
<div class="a" style="left:1121.5px;top:325.5px;width:227.0px;height:25.0px;background:#e0e0e0;border-right:1px solid #b4b4b4;border-bottom:1px solid #b4b4b4"></div>
<div class="t" style="left:1313.29px;top:333.31px;font-size:11.8px;color:#000;transform:scaleX(0.9200);transform-origin:0 0">+3.7 %</div>
<div class="a" style="left:1348.5px;top:325.5px;width:212.0px;height:25.0px;background:#e0e0e0;border-right:1px solid #b4b4b4;border-bottom:1px solid #b4b4b4"></div>
<div class="a" style="left:1560.5px;top:325.5px;width:210.0px;height:25.0px;background:#e0e0e0;border-right:1px solid #b4b4b4;border-bottom:1px solid #b4b4b4"></div>
<div class="a" style="left:11px;top:350.5px;width:53px;height:4px;background:#f0f0f0;border-right:2px solid #6e6e6e"></div>
<div class="a" style="left:64px;top:350.5px;width:210.5px;height:4px;background:#f0f0f0;border-right:1px solid #b4b4b4"></div>
<div class="a" style="left:274.5px;top:350.5px;width:212.5px;height:4px;background:#f0f0f0;border-right:1px solid #b4b4b4"></div>
<div class="a" style="left:487px;top:350.5px;width:210.5px;height:4px;background:#f0f0f0;border-right:1px solid #b4b4b4"></div>
<div class="a" style="left:697.5px;top:350.5px;width:213.5px;height:4px;background:#f0f0f0;border-right:1px solid #b4b4b4"></div>
<div class="a" style="left:911px;top:350.5px;width:210.5px;height:4px;background:#f0f0f0;border-right:1px solid #b4b4b4"></div>
<div class="a" style="left:1121.5px;top:350.5px;width:227.0px;height:4px;background:#f0f0f0;border-right:1px solid #b4b4b4"></div>
<div class="a" style="left:1348.5px;top:350.5px;width:212.0px;height:4px;background:#f0f0f0;border-right:1px solid #b4b4b4"></div>
<div class="a" style="left:1560.5px;top:350.5px;width:210.0px;height:4px;background:#f0f0f0;border-right:1px solid #b4b4b4"></div>
<div class="a" style="left:11px;top:354px;width:1760px;height:19px;background:#f0f0f0;border-top:1px solid #fafafa"></div>
<svg class="ico" style="left:14px;top:358px" width="8" height="10"><path d="M7 1v8L1 5z" fill="#a6a6a6"/></svg>
<svg class="ico" style="left:1760px;top:358px" width="8" height="10"><path d="M1 1v8l6-4z" fill="#a6a6a6"/></svg>
<div class="a" style="left:1771px;top:178px;width:18px;height:196px;background:#f0f0f0"></div>
<div class="a" style="left:1779px;top:195px;width:2px;height:141px;background:#888"></div>
<div class="a" style="left:1790px;top:180px;width:16px;height:195px;background:#ebebeb"></div>
<div class="a" style="left:1809px;top:159px;width:6px;height:225px;background:#fafafa"></div>
<div class="a" style="left:1811px;top:159px;width:2px;height:225px;background:#7a7a7a"></div>
<div class="pan" style="left:1815px;top:162px;width:80px;height:98px;background:#ebebeb"></div>
<div class="hdr" style="left:1816px;top:163px;width:78px;height:17px"></div>
<div class="t" style="left:1821.46px;top:166.43px;font-size:11.3px;font-weight:bold;color:#3c3c3c;transform:scaleX(1.4220);transform-origin:0 0">Display</div>
<div class="a" style="left:1823px;top:183.3px;width:11px;height:11px;border-radius:50%;background:#fff;border:1px solid #c8c8c8;border-right-color:#eee;border-bottom-color:#eee"></div>
<div class="t" style="left:1840.87px;top:182.87px;font-size:12.9px;color:#a8a8a8;transform:scaleX(1.0918);transform-origin:0 0">Sensor</div>
<div class="a" style="left:1823px;top:199.3px;width:11px;height:11px;border-radius:50%;background:#fff;border:1px solid #666;border-right-color:#eee;border-bottom-color:#eee"></div>
<div class="t" style="left:1840.55px;top:198.87px;font-size:12.9px;color:#000;transform:scaleX(0.9219);transform-origin:0 0">RGB</div>
<div class="a" style="left:1823px;top:215.4px;width:11px;height:11px;border-radius:50%;background:#fff;border:1px solid #666;border-right-color:#eee;border-bottom-color:#eee"></div>
<div class="t" style="left:1841.21px;top:214.97px;font-size:12.9px;color:#000;transform:scaleX(0.9064);transform-origin:0 0">XYZ</div>
<div class="a" style="left:1823px;top:231.7px;width:11px;height:11px;border-radius:50%;background:#fff;border:1px solid #666;border-right-color:#eee;border-bottom-color:#eee"></div>
<div class="t" style="left:1841.36px;top:231.27px;font-size:12.9px;color:#000;transform:scaleX(1.0874);transform-origin:0 0">xyz</div>
<div class="a" style="left:1823px;top:246.2px;width:11px;height:11px;border-radius:50%;background:#fff;border:1px solid #666;border-right-color:#eee;border-bottom-color:#eee"></div>
<div class="a" style="left:1826.5px;top:249.7px;width:4px;height:4px;border-radius:50%;background:#000"></div>
<div class="t" style="left:1841.38px;top:245.77px;font-size:12.9px;color:#000;transform:scaleX(0.9577);transform-origin:0 0">xyY</div>
<div class="a" style="left:1815px;top:264px;width:80px;height:30px;background:#eeeeee;border:1px solid;border-color:#fff #a0a0a0 #a0a0a0 #fff"></div>
<div class="t" style="left:1862.66px;top:274.39px;font-size:13px;transform:scaleX(0.9886);transform-origin:0 0">Go</div>
<div class="a" style="left:1815px;top:294px;width:80px;height:30px;background:#eeeeee;border:1px solid;border-color:#fff #a0a0a0 #a0a0a0 #fff"></div>
<div class="t" style="left:1850.02px;top:303.69px;font-size:13px;transform:scaleX(1.1330);transform-origin:0 0">Delete</div>
<div class="a" style="left:1815px;top:324px;width:80px;height:30px;background:#eeeeee;border:1px solid;border-color:#fff #a0a0a0 #a0a0a0 #fff"></div>
<div class="t" style="left:1857.00px;top:333.29px;font-size:13px;transform:scaleX(1.0547);transform-origin:0 0">Refs</div>
<svg class="ico" style="left:1817px;top:266px" width="36" height="28" viewBox="0 0 36 28"><circle cx="22" cy="5" r="4" fill="url(#bY)"/><circle cx="27" cy="10" r="4" fill="url(#bM)"/><circle cx="25" cy="16" r="4" fill="url(#bC)"/><circle cx="7" cy="22" r="6" fill="url(#bR)"/><circle cx="13" cy="20" r="5.5" fill="url(#bB)"/><circle cx="19" cy="17" r="5" fill="url(#bG)"/></svg>
<svg class="ico" style="left:1818px;top:296px" width="28" height="28" viewBox="0 0 28 28"><path d="M3 5c4-3 16-3 20 0l-3 20c-3 2-11 2-14 0z" fill="#a8d8f8" stroke="#5aa0d0"/><path d="M9 14a5 5 0 0 1 9-2l1-2v5h-5l2-1a3 3 0 0 0-5 1z" fill="#20a020"/><path d="M18 17a5 5 0 0 1-9 2l-1 2v-5h5l-2 1a3 3 0 0 0 5-1z" fill="#20a020"/></svg>
<svg class="ico" style="left:1817px;top:329px" width="34" height="22" viewBox="0 0 34 22"><rect x="1" y="12" width="3" height="10" fill="#4000c0"/><rect x="4" y="8" width="3" height="14" fill="#0040ff"/><rect x="7" y="10" width="3" height="12" fill="#00a0ff"/><rect x="10" y="12" width="3" height="10" fill="#00c000"/><rect x="13" y="6" width="3" height="16" fill="#c0e000"/><rect x="16" y="4" width="3" height="18" fill="#ffe000"/><rect x="19" y="8" width="3" height="14" fill="#ff8000"/><rect x="22" y="3" width="3" height="19" fill="#a00000"/><rect x="25" y="9" width="3" height="13" fill="#a00000"/><rect x="28" y="10" width="4" height="12" fill="#e00000"/></svg>
<div class="a" style="left:1815px;top:355px;width:80px;height:24px;background:#a4a4a4"></div>
<div class="a" style="left:1818px;top:358px;width:55px;height:18px;background:#f0f0f0"></div>
<div class="a" style="left:1822px;top:361px;width:12px;height:12px;background:#fff;border:1px solid #333"></div>
<div class="t" style="left:1835.82px;top:360.49px;font-size:13px;transform:scaleX(1.1386);transform-origin:0 0">Edit</div><div class="a" style="left:2px;top:377px;width:1898px;height:3px;background:#fafafa"></div>
<div class="a" style="left:0;top:379px;width:1900px;height:4px;background:#7a7a7a"></div>
<div class="a" style="left:2px;top:383px;width:1898px;height:4px;background:#fafafa"></div>
<div class="a" style="left:383px;top:383px;width:8px;height:637px;background:#fafafa"></div>
<div class="a" style="left:385px;top:383px;width:2px;height:637px;background:#7a7a7a"></div>
<div class="a" style="left:2px;top:1015px;width:1898px;height:3px;background:#fafafa"></div>
<div class="a" style="left:0;top:1017px;width:1900px;height:2px;background:#7a7a7a"></div>
<div class="a" style="left:0;top:1019px;width:1900px;height:3px;background:#b8b8b8"></div>
<div class="pan" style="left:5px;top:387px;width:378px;height:629px"></div>
<div class="hdr" style="left:6px;top:388px;width:376px;height:18px"></div>
<div class="t" style="left:11.49px;top:391.13px;font-size:11.3px;font-weight:bold;color:#3c3c3c;transform:scaleX(1.2108);transform-origin:0 0">Selected color</div>
<div class="a" style="left:14px;top:409px;width:114px;height:15px;background:#efefef"></div>
<div class="t" style="left:16.75px;top:409.77px;font-size:12.9px;transform:scaleX(1.0173);transform-origin:0 0">RGB Levels</div>
<div class="a" style="left:228px;top:408px;width:130px;height:16px;background:#efefef"></div>
<div class="t" style="left:241.00px;top:408.37px;font-size:12.9px;transform:scaleX(1.0922);transform-origin:0 0">Current Measure</div>
<div class="a" style="left:14px;top:433px;width:200px;height:86px;background:#f0f0f0"></div>
<div class="a" style="left:14px;top:477px;width:200px;height:1px;background:repeating-linear-gradient(90deg,#666 0 3px,transparent 3px 5px)"></div>
<svg class="ico" style="left:14px;top:507px" width="200" height="13" viewBox="0 0 200 13"><path d="M0 7Q25 -1 50 7z" fill="#a00000" stroke="#000" stroke-width="0.8"/><path d="M51 7Q76 -1 101 7z" fill="#00a000" stroke="#000" stroke-width="0.8"/><path d="M102 7Q127 -1 152 7z" fill="#0000b0" stroke="#000" stroke-width="0.8"/><path d="M153 7Q178 -1 203 7z" fill="#c08010" stroke="#000" stroke-width="0.8"/><rect x="0" y="7" width="200" height="5" fill="#000"/></svg>
<div class="t" style="left:25.99px;top:495.75px;font-size:12px;font-weight:bold;font-family:'Liberation Serif',serif;color:#101030;transform:scaleX(0.9647);transform-origin:0 0">0.0%</div>
<div class="t" style="left:76.79px;top:495.75px;font-size:12px;font-weight:bold;font-family:'Liberation Serif',serif;color:#101030;transform:scaleX(0.9725);transform-origin:0 0">0.0%</div>
<div class="t" style="left:127.79px;top:495.75px;font-size:12px;font-weight:bold;font-family:'Liberation Serif',serif;color:#101030;transform:scaleX(0.9647);transform-origin:0 0">0.0%</div>
<div class="t" style="left:175.00px;top:495.75px;font-size:12px;font-weight:bold;font-family:'Liberation Serif',serif;color:#101030;transform:scaleX(1.0377);transform-origin:0 0">dE 0.0</div>
<div class="a" style="left:16px;top:533px;width:192px;height:75px;background:#f0f0f0"></div>
<div class="t" style="left:34.59px;top:534.69px;font-size:13px;font-weight:bold;transform:scaleX(1.0820);transform-origin:0 0">Measure</div>
<div class="t" style="left:126.61px;top:534.69px;font-size:13px;font-weight:bold;transform:scaleX(1.0516);transform-origin:0 0">Reference</div>
<div class="a" style="left:16px;top:621px;width:45px;height:16px;background:#efefef"></div>
<div class="t" style="left:17.71px;top:623.07px;font-size:12.9px;transform:scaleX(1.1332);transform-origin:0 0">Target</div>
<div class="a" style="left:50px;top:638px;width:116px;height:89px;border:1px solid #000;background:conic-gradient(from 0deg at 50% 50%,#40ff00 0deg,#ffc000 52deg,#ff0000 92deg,#ff0090 126deg,#8000c0 180deg,#0000ff 234deg,#00ff80 309deg,#40ff00 360deg)"></div><svg class="ico" style="left:50px;top:638px" width="116" height="89" viewBox="50 638 116 89"><rect x="67.5" y="651.5" width="81.0" height="62.0" rx="8" fill="#000" stroke="#fff" stroke-width="1.2"/><ellipse cx="108.5" cy="682.5" rx="20.5" ry="15" fill="none" stroke="#fff" stroke-width="1.2" stroke-dasharray="2.5 2"/><path d="M65 682.5H152M108.5 651V714" stroke="#fff" stroke-width="1.2" stroke-dasharray="2.5 2"/></svg>
<div class="a" style="left:220px;top:430px;width:153px;height:578px;background:#f0f0f0;border-top:2px solid #6e6e6e;border-left:2px solid #6e6e6e"></div>
<div class="a" style="left:222px;top:982px;width:133px;height:25px;background:#a0a0a0"></div>
<div class="a" style="left:222px;top:432.00px;width:52px;height:22.98px;background:#f0f0f0;border-right:1.5px solid #6e6e6e;border-bottom:1.5px solid #5a5a5a"></div>
<div class="a" style="left:274px;top:432.00px;width:80px;height:22.98px;background:#ffffff;border-bottom:1px solid #c8c8c8"></div>
<div class="t" style="left:226.42px;top:438.18px;font-size:12.3px;font-weight:bold;transform:scaleX(0.9514);transform-origin:0 0">Y cd/m<span style="font-size:8px;vertical-align:5px">2</span></div>
<div class="a" style="left:222px;top:454.98px;width:52px;height:22.98px;background:#f0f0f0;border-right:1.5px solid #6e6e6e;border-bottom:1.5px solid #5a5a5a"></div>
<div class="a" style="left:274px;top:454.98px;width:80px;height:22.98px;background:#ffffff;border-bottom:1px solid #c8c8c8"></div>
<div class="t" style="left:234.31px;top:460.99px;font-size:12.5px;font-weight:bold">Y ftL</div>
<div class="a" style="left:222px;top:477.96px;width:52px;height:22.98px;background:#f0f0f0;border-right:1.5px solid #6e6e6e;border-bottom:1.5px solid #5a5a5a"></div>
<div class="a" style="left:274px;top:477.96px;width:80px;height:22.98px;background:#ffffff;border-bottom:1px solid #c8c8c8"></div>
<div class="t" style="left:241.88px;top:483.97px;font-size:12.5px;font-weight:bold">T°</div>
<div class="a" style="left:222px;top:500.94px;width:52px;height:22.98px;background:#f0f0f0;border-right:1.5px solid #6e6e6e;border-bottom:1.5px solid #5a5a5a"></div>
<div class="a" style="left:274px;top:500.94px;width:80px;height:22.98px;background:#e0e0e0;border-bottom:1px solid #c8c8c8"></div>
<div class="t" style="left:243.81px;top:506.95px;font-size:12.5px;font-weight:bold">X</div>
<div class="a" style="left:222px;top:523.92px;width:52px;height:22.98px;background:#f0f0f0;border-right:1.5px solid #6e6e6e;border-bottom:1.5px solid #5a5a5a"></div>
<div class="a" style="left:274px;top:523.92px;width:80px;height:22.98px;background:#e0e0e0;border-bottom:1px solid #c8c8c8"></div>
<div class="t" style="left:243.84px;top:529.93px;font-size:12.5px;font-weight:bold">Y</div>
<div class="a" style="left:222px;top:546.90px;width:52px;height:22.98px;background:#f0f0f0;border-right:1.5px solid #6e6e6e;border-bottom:1.5px solid #5a5a5a"></div>
<div class="a" style="left:274px;top:546.90px;width:80px;height:22.98px;background:#e0e0e0;border-bottom:1px solid #c8c8c8"></div>
<div class="t" style="left:244.16px;top:552.91px;font-size:12.5px;font-weight:bold">Z</div>
<div class="a" style="left:222px;top:569.88px;width:52px;height:22.98px;background:#f0f0f0;border-right:1.5px solid #6e6e6e;border-bottom:1.5px solid #5a5a5a"></div>
<div class="a" style="left:274px;top:569.88px;width:80px;height:22.98px;background:#ffffff;border-bottom:1px solid #c8c8c8"></div>
<div class="t" style="left:243.22px;top:575.89px;font-size:12.5px;font-weight:bold">R</div>
<div class="a" style="left:222px;top:592.86px;width:52px;height:22.98px;background:#f0f0f0;border-right:1.5px solid #6e6e6e;border-bottom:1.5px solid #5a5a5a"></div>
<div class="a" style="left:274px;top:592.86px;width:80px;height:22.98px;background:#ffffff;border-bottom:1px solid #c8c8c8"></div>
<div class="t" style="left:243.28px;top:598.87px;font-size:12.5px;font-weight:bold">G</div>
<div class="a" style="left:222px;top:615.84px;width:52px;height:22.98px;background:#f0f0f0;border-right:1.5px solid #6e6e6e;border-bottom:1.5px solid #5a5a5a"></div>
<div class="a" style="left:274px;top:615.84px;width:80px;height:22.98px;background:#ffffff;border-bottom:1px solid #c8c8c8"></div>
<div class="t" style="left:243.34px;top:621.85px;font-size:12.5px;font-weight:bold">B</div>
<div class="a" style="left:222px;top:638.82px;width:52px;height:22.98px;background:#f0f0f0;border-right:1.5px solid #6e6e6e;border-bottom:1.5px solid #5a5a5a"></div>
<div class="a" style="left:274px;top:638.82px;width:80px;height:22.98px;background:#e0e0e0;border-bottom:1px solid #c8c8c8"></div>
<div class="t" style="left:244.53px;top:644.83px;font-size:12.5px;font-weight:bold">x</div>
<div class="a" style="left:222px;top:661.80px;width:52px;height:22.98px;background:#f0f0f0;border-right:1.5px solid #6e6e6e;border-bottom:1.5px solid #5a5a5a"></div>
<div class="a" style="left:274px;top:661.80px;width:80px;height:22.98px;background:#e0e0e0;border-bottom:1px solid #c8c8c8"></div>
<div class="t" style="left:244.53px;top:667.81px;font-size:12.5px;font-weight:bold">y</div>
<div class="a" style="left:222px;top:684.78px;width:52px;height:22.98px;background:#f0f0f0;border-right:1.5px solid #6e6e6e;border-bottom:1.5px solid #5a5a5a"></div>
<div class="a" style="left:274px;top:684.78px;width:80px;height:22.98px;background:#e0e0e0;border-bottom:1px solid #c8c8c8"></div>
<div class="t" style="left:243.84px;top:690.79px;font-size:12.5px;font-weight:bold">Y</div>
<div class="a" style="left:222px;top:707.76px;width:52px;height:22.98px;background:#f0f0f0;border-right:1.5px solid #6e6e6e;border-bottom:1.5px solid #5a5a5a"></div>
<div class="a" style="left:274px;top:707.76px;width:80px;height:22.98px;background:#ffffff;border-bottom:1px solid #c8c8c8"></div>
<div class="t" style="left:244.53px;top:713.77px;font-size:12.5px;font-weight:bold">x</div>
<div class="a" style="left:222px;top:730.74px;width:52px;height:22.98px;background:#f0f0f0;border-right:1.5px solid #6e6e6e;border-bottom:1.5px solid #5a5a5a"></div>
<div class="a" style="left:274px;top:730.74px;width:80px;height:22.98px;background:#ffffff;border-bottom:1px solid #c8c8c8"></div>
<div class="t" style="left:244.53px;top:736.75px;font-size:12.5px;font-weight:bold">y</div>
<div class="a" style="left:222px;top:753.72px;width:52px;height:22.98px;background:#f0f0f0;border-right:1.5px solid #6e6e6e;border-bottom:1.5px solid #5a5a5a"></div>
<div class="a" style="left:274px;top:753.72px;width:80px;height:22.98px;background:#ffffff;border-bottom:1px solid #c8c8c8"></div>
<div class="t" style="left:244.84px;top:759.73px;font-size:12.5px;font-weight:bold">z</div>
<div class="a" style="left:222px;top:776.70px;width:52px;height:22.98px;background:#f0f0f0;border-right:1.5px solid #6e6e6e;border-bottom:1.5px solid #5a5a5a"></div>
<div class="a" style="left:274px;top:776.70px;width:80px;height:22.98px;background:#e0e0e0;border-bottom:1px solid #c8c8c8"></div>
<div class="t" style="left:243.97px;top:782.71px;font-size:12.5px;font-weight:bold">L</div>
<div class="a" style="left:222px;top:799.68px;width:52px;height:22.98px;background:#f0f0f0;border-right:1.5px solid #6e6e6e;border-bottom:1.5px solid #5a5a5a"></div>
<div class="a" style="left:274px;top:799.68px;width:80px;height:22.98px;background:#e0e0e0;border-bottom:1px solid #c8c8c8"></div>
<div class="t" style="left:244.28px;top:805.69px;font-size:12.5px;font-weight:bold">a</div>
<div class="a" style="left:222px;top:822.66px;width:52px;height:22.98px;background:#f0f0f0;border-right:1.5px solid #6e6e6e;border-bottom:1.5px solid #5a5a5a"></div>
<div class="a" style="left:274px;top:822.66px;width:80px;height:22.98px;background:#e0e0e0;border-bottom:1px solid #c8c8c8"></div>
<div class="t" style="left:244.03px;top:828.67px;font-size:12.5px;font-weight:bold">b</div>
<div class="a" style="left:222px;top:845.64px;width:52px;height:22.98px;background:#f0f0f0;border-right:1.5px solid #6e6e6e;border-bottom:1.5px solid #5a5a5a"></div>
<div class="a" style="left:274px;top:845.64px;width:80px;height:22.98px;background:#ffffff;border-bottom:1px solid #c8c8c8"></div>
<div class="t" style="left:243.97px;top:851.65px;font-size:12.5px;font-weight:bold">L</div>
<div class="a" style="left:222px;top:868.62px;width:52px;height:22.98px;background:#f0f0f0;border-right:1.5px solid #6e6e6e;border-bottom:1.5px solid #5a5a5a"></div>
<div class="a" style="left:274px;top:868.62px;width:80px;height:22.98px;background:#ffffff;border-bottom:1px solid #c8c8c8"></div>
<div class="t" style="left:243.41px;top:874.63px;font-size:12.5px;font-weight:bold">C</div>
<div class="a" style="left:222px;top:891.60px;width:52px;height:22.98px;background:#f0f0f0;border-right:1.5px solid #6e6e6e;border-bottom:1.5px solid #5a5a5a"></div>
<div class="a" style="left:274px;top:891.60px;width:80px;height:22.98px;background:#ffffff;border-bottom:1px solid #c8c8c8"></div>
<div class="t" style="left:243.50px;top:897.61px;font-size:12.5px;font-weight:bold">H</div>
<div class="a" style="left:222px;top:914.58px;width:52px;height:22.98px;background:#f0f0f0;border-right:1.5px solid #6e6e6e;border-bottom:1.5px solid #5a5a5a"></div>
<div class="a" style="left:274px;top:914.58px;width:80px;height:22.98px;background:#e0e0e0;border-bottom:1px solid #c8c8c8"></div>
<div class="t" style="left:243.97px;top:920.59px;font-size:12.5px;font-weight:bold">L</div>
<div class="a" style="left:222px;top:937.56px;width:52px;height:22.98px;background:#f0f0f0;border-right:1.5px solid #6e6e6e;border-bottom:1.5px solid #5a5a5a"></div>
<div class="a" style="left:274px;top:937.56px;width:80px;height:22.98px;background:#e0e0e0;border-bottom:1px solid #c8c8c8"></div>
<div class="t" style="left:242.81px;top:943.57px;font-size:12.5px;font-weight:bold">M</div>
<div class="a" style="left:222px;top:960.54px;width:52px;height:22.98px;background:#f0f0f0;border-right:1.5px solid #6e6e6e;border-bottom:1.5px solid #5a5a5a"></div>
<div class="a" style="left:274px;top:960.54px;width:80px;height:22.98px;background:#e0e0e0;border-bottom:1px solid #c8c8c8"></div>
<div class="t" style="left:243.88px;top:966.55px;font-size:12.5px;font-weight:bold">S</div>
<svg class="ico" style="left:358px;top:436px" width="12" height="8"><path d="M1 7h10L6 1z" fill="#a6a6a6"/></svg>
<svg class="ico" style="left:358px;top:994px" width="12" height="8"><path d="M1 1h10L6 7z" fill="#a6a6a6"/></svg>
<div class="pan" style="left:391px;top:387px;width:1506px;height:629px"></div>
<div class="hdr" style="left:392px;top:388px;width:1504px;height:18px"></div>
<div class="t" style="left:397.37px;top:391.53px;font-size:11.3px;font-weight:bold;color:#3c3c3c;transform:scaleX(1.2710);transform-origin:0 0">Information</div>
<div class="a" style="left:396px;top:409px;width:302px;height:23px;background:#fff;border-top:2px solid #6e6e6e;border-left:2px solid #6e6e6e;border-right:1px solid #d8d8d8;border-bottom:1px solid #e8e8e8"></div>
<div class="a" style="left:399px;top:413px;width:280px;height:16px;background:#0078d7"></div>
<div class="t" style="left:400.81px;top:414.97px;font-size:12.9px;color:#fff;transform:scaleX(1.1110);transform-origin:0 0">Target - CIE</div>
<div class="a" style="left:679px;top:411px;width:17px;height:19px;background:#e6e6e6;border:1px solid;border-color:#fff #6e6e6e #6e6e6e #fff"></div>
<svg class="ico" style="left:683px;top:419px" width="9" height="5"><path d="M0 0h8l-4 4z" fill="#000"/></svg>
<div class="a" style="left:398px;top:439px;width:748px;height:570px;border:1px solid #000;background:conic-gradient(from 0deg at 50% 50%,#40ff00 0deg,#ffc000 52deg,#ff0000 92deg,#ff0090 126deg,#8000c0 180deg,#0000ff 234deg,#00ff80 309deg,#40ff00 360deg)"></div><svg class="ico" style="left:398px;top:439px" width="748" height="570" viewBox="398 439 748 570"><rect x="510.5" y="524.5" width="522.5" height="398.5" rx="11" fill="#000" stroke="#fff" stroke-width="1.1"/><ellipse cx="771.8" cy="723.8" rx="147.8" ry="113.3" fill="none" stroke="#fff" stroke-width="1.1" stroke-dasharray="3 2"/><path d="M477.5 723.8H1066.5M771.8 497.5V951" stroke="#fff" stroke-width="1.1" stroke-dasharray="3 2"/></svg><div class="a" style="left:1145px;top:437px;width:750px;height:573px;background:#f8f8f8;border-left:2px solid #a0a0a0;border-top:2px solid #a0a0a0"></div>
<div class="a" style="left:1150px;top:442px;width:740px;height:562px;background:#02080b;overflow:hidden">
<div class="a" style="left:0;top:0;width:740px;height:562px;clip-path:path('M129.6 62.4C126.0 63.3 114.6 65.5 108.0 68.0C101.4 70.5 95.0 73.8 90.0 77.5C85.0 81.2 81.2 85.2 78.0 90.0C74.8 94.8 72.5 98.1 70.6 106.2C68.7 114.3 67.5 126.8 66.5 138.4C65.5 150.0 64.9 165.3 64.6 176.0C64.3 186.7 64.4 193.8 64.6 202.8C64.8 211.8 65.5 221.0 66.0 230.0C66.5 239.0 66.9 247.8 67.9 256.5C68.9 265.2 70.2 273.4 72.0 282.0C73.8 290.6 75.4 296.1 79.0 308.4C82.6 320.7 87.8 340.5 93.7 355.8C99.6 371.1 107.1 385.0 114.5 400.3C121.9 415.6 130.3 432.9 138.2 447.7C146.1 462.5 155.1 478.3 162.0 489.2C168.9 500.1 175.4 507.4 179.7 512.9C184.0 518.4 185.8 519.8 188.0 522.0C190.2 524.2 192.2 525.6 193.0 526.3L656.6 378.0C649.9 372.8 633.1 358.0 616.6 346.9C600.1 335.8 575.9 323.0 557.4 311.3C538.9 299.6 519.9 286.2 505.7 276.6C491.5 267.0 491.6 267.0 472.4 253.8C453.2 240.6 410.7 211.3 390.3 197.4C369.9 183.5 363.9 180.0 350.0 170.6C336.1 161.2 322.2 150.9 306.9 141.0C291.7 131.1 274.2 120.7 258.5 111.5C242.8 102.3 226.3 92.7 212.9 86.0C199.5 79.3 188.5 74.9 178.0 71.2C167.5 67.5 158.1 65.5 150.0 64.0C141.9 62.5 133.0 62.7 129.6 62.4Z');background:conic-gradient(from 0deg at 318.5999999999999px 350px,#10c030 0deg,#80c000 19deg,#b0b800 40deg,#c0a800 52deg,#c88000 70deg,#c05000 81deg,#c03800 88.5deg,#c8004a 91.5deg,#c40058 110deg,#c00098 145deg,#8800c8 180deg,#2010d0 215deg,#0040d0 226deg,#0098c8 247deg,#00b0c0 262deg,#00c0a8 300deg,#00c080 328deg,#00c040 346deg,#10c030 360deg)"></div>
<div class="a" style="left:0;top:0;width:740px;height:562px;clip-path:path('M129.6 62.4C126.0 63.3 114.6 65.5 108.0 68.0C101.4 70.5 95.0 73.8 90.0 77.5C85.0 81.2 81.2 85.2 78.0 90.0C74.8 94.8 72.5 98.1 70.6 106.2C68.7 114.3 67.5 126.8 66.5 138.4C65.5 150.0 64.9 165.3 64.6 176.0C64.3 186.7 64.4 193.8 64.6 202.8C64.8 211.8 65.5 221.0 66.0 230.0C66.5 239.0 66.9 247.8 67.9 256.5C68.9 265.2 70.2 273.4 72.0 282.0C73.8 290.6 75.4 296.1 79.0 308.4C82.6 320.7 87.8 340.5 93.7 355.8C99.6 371.1 107.1 385.0 114.5 400.3C121.9 415.6 130.3 432.9 138.2 447.7C146.1 462.5 155.1 478.3 162.0 489.2C168.9 500.1 175.4 507.4 179.7 512.9C184.0 518.4 185.8 519.8 188.0 522.0C190.2 524.2 192.2 525.6 193.0 526.3L656.6 378.0C649.9 372.8 633.1 358.0 616.6 346.9C600.1 335.8 575.9 323.0 557.4 311.3C538.9 299.6 519.9 286.2 505.7 276.6C491.5 267.0 491.6 267.0 472.4 253.8C453.2 240.6 410.7 211.3 390.3 197.4C369.9 183.5 363.9 180.0 350.0 170.6C336.1 161.2 322.2 150.9 306.9 141.0C291.7 131.1 274.2 120.7 258.5 111.5C242.8 102.3 226.3 92.7 212.9 86.0C199.5 79.3 188.5 74.9 178.0 71.2C167.5 67.5 158.1 65.5 150.0 64.0C141.9 62.5 133.0 62.7 129.6 62.4Z');background:radial-gradient(ellipse 38px 75px at 255px 303px,rgba(220,255,255,0.38),rgba(220,255,255,0) 100%)"></div>
<svg class="ico" style="left:0;top:0" width="740" height="562"><path d="M61.3 0V562M143.6 0V562M225.9 0V562M308.2 0V562M390.5 0V562M472.8 0V562M555.1 0V562M637.4 0V562M0 478.8H740M0 422.5H740M0 366.2H740M0 310.0H740M0 253.8H740M0 197.5H740M0 141.2H740M0 85.0H740M0 28.8H740" stroke="#474747" stroke-width="1.1"/></svg>
<div class="a" style="left:0;top:0;width:740px;height:562px;clip-path:path('M305 190L586 350L194 497Z');background:radial-gradient(circle at 318.5999999999999px 356px,#fff 0px,rgba(255,255,255,0.92) 20px,rgba(255,255,255,0.6) 75px,rgba(255,255,255,0.3) 135px,rgba(255,255,255,0.08) 200px,rgba(255,255,255,0) 250px),conic-gradient(from 0deg at 318.5999999999999px 350px,#20ff40 0deg,#a0ff00 22deg,#ffff00 40deg,#ff9000 62deg,#ff3020 88deg,#ff0070 125deg,#ff00ff 173deg,#2020ff 220deg,#00a0ff 245deg,#00ffff 268deg,#20ff80 320deg,#20ff40 360deg)"></div>
<svg class="ico" style="left:0;top:0" width="740" height="562" viewBox="0 0 740 562" font-family="Liberation Serif"><defs><radialGradient id="mg" cx="0.4" cy="0.35" r="0.65"><stop offset="0" stop-color="#60ff60"/><stop offset="1" stop-color="#00a000"/></radialGradient><radialGradient id="my" cx="0.4" cy="0.35" r="0.65"><stop offset="0" stop-color="#ffffc0"/><stop offset="1" stop-color="#b8b040"/></radialGradient><radialGradient id="mc" cx="0.4" cy="0.35" r="0.65"><stop offset="0" stop-color="#c0ffff"/><stop offset="1" stop-color="#40b8c0"/></radialGradient><radialGradient id="mm" cx="0.4" cy="0.35" r="0.65"><stop offset="0" stop-color="#ff80ff"/><stop offset="1" stop-color="#c000c0"/></radialGradient><radialGradient id="mr" cx="0.4" cy="0.35" r="0.65"><stop offset="0" stop-color="#ff6050"/><stop offset="1" stop-color="#c01010"/></radialGradient><radialGradient id="mb" cx="0.4" cy="0.35" r="0.65"><stop offset="0" stop-color="#6070ff"/><stop offset="1" stop-color="#1010c0"/></radialGradient><radialGradient id="mw" cx="0.4" cy="0.35" r="0.65"><stop offset="0" stop-color="#ffffff"/><stop offset="1" stop-color="#c8c8c8"/></radialGradient><filter id="sh" x="-50%" y="-50%" width="200%" height="200%"><feDropShadow dx="1.5" dy="1.5" stdDeviation="1.2" flood-color="#000" flood-opacity="0.6"/></filter></defs><path d="M129.6 62.4C126.0 63.3 114.6 65.5 108.0 68.0C101.4 70.5 95.0 73.8 90.0 77.5C85.0 81.2 81.2 85.2 78.0 90.0C74.8 94.8 72.5 98.1 70.6 106.2C68.7 114.3 67.5 126.8 66.5 138.4C65.5 150.0 64.9 165.3 64.6 176.0C64.3 186.7 64.4 193.8 64.6 202.8C64.8 211.8 65.5 221.0 66.0 230.0C66.5 239.0 66.9 247.8 67.9 256.5C68.9 265.2 70.2 273.4 72.0 282.0C73.8 290.6 75.4 296.1 79.0 308.4C82.6 320.7 87.8 340.5 93.7 355.8C99.6 371.1 107.1 385.0 114.5 400.3C121.9 415.6 130.3 432.9 138.2 447.7C146.1 462.5 155.1 478.3 162.0 489.2C168.9 500.1 175.4 507.4 179.7 512.9C184.0 518.4 185.8 519.8 188.0 522.0C190.2 524.2 192.2 525.6 193.0 526.3L656.6 378.0C649.9 372.8 633.1 358.0 616.6 346.9C600.1 335.8 575.9 323.0 557.4 311.3C538.9 299.6 519.9 286.2 505.7 276.6C491.5 267.0 491.6 267.0 472.4 253.8C453.2 240.6 410.7 211.3 390.3 197.4C369.9 183.5 363.9 180.0 350.0 170.6C336.1 161.2 322.2 150.9 306.9 141.0C291.7 131.1 274.2 120.7 258.5 111.5C242.8 102.3 226.3 92.7 212.9 86.0C199.5 79.3 188.5 74.9 178.0 71.2C167.5 67.5 158.1 65.5 150.0 64.0C141.9 62.5 133.0 62.7 129.6 62.4Z" fill="none" stroke="#f0a000" stroke-width="1.2"/><path d="M305 190L586 350L194 497Z" fill="none" stroke="#fff" stroke-width="3" stroke-linejoin="miter"/><path d="M310.5 199.9L414.9 258.3" stroke="#007000" stroke-width="2.4"/><path d="M414.9 258.3L477.0 293.1" stroke="#787000" stroke-width="2.4"/><path d="M477.0 293.1L575.8 348.3" stroke="#900000" stroke-width="2.4"/><path d="M573.0 351.1L369.3 427.8" stroke="#900010" stroke-width="2.4"/><path d="M369.3 427.8L204.7 489.8" stroke="#500090" stroke-width="2.4"/><path d="M194.3 486.7L244.0 358.9" stroke="#000090" stroke-width="2.4"/><path d="M244.0 358.9L264.2 307.2" stroke="#006878" stroke-width="2.4"/><path d="M264.2 307.2L303.3 206.7" stroke="#007000" stroke-width="2.4"/><path d="M5 350.0H735M318.5 5V560" stroke="#e0e0e0" stroke-width="1" stroke-dasharray="3 3"/><path d="M306.0 188.0L318.0 348.0M409.0 246.0L318.0 348.0M193.0 499.0L318.0 348.0M330.0 448.0L318.0 353.0" stroke="#202020" stroke-width="1" stroke-dasharray="3 3"/><path d="M255.0 407.0C290.0 373.0 320.0 348.0 350.0 333.0S410.0 306.0 450.0 299.0" fill="none" stroke="#000" stroke-width="1.3"/><circle cx="297.5" cy="369.0" r="3" fill="#fff" stroke="#000" stroke-width="1"/><circle cx="336.0" cy="340.0" r="3" fill="#fff" stroke="#000" stroke-width="1"/><circle cx="376.0" cy="320.0" r="3" fill="#fff" stroke="#000" stroke-width="1"/><circle cx="422.0" cy="304.0" r="3" fill="#fff" stroke="#000" stroke-width="1"/><circle cx="441.0" cy="300.5" r="3" fill="#fff" stroke="#000" stroke-width="1"/><circle cx="429.0" cy="304.7" r="3" fill="#10d010" stroke="#006000" stroke-width="0.6"/><circle cx="348.0" cy="337.0" r="3" fill="#10d010" stroke="#006000" stroke-width="0.6"/><rect x="303.1" y="247.3" width="15" height="15" fill="none" fill-opacity="0.85"/><path d="M303.1 262.3V247.3H318.1" fill="none" stroke="#c89860" stroke-width="1.5"/><path d="M318.1 247.3V262.3H303.1" fill="none" stroke="#c89860" stroke-width="1.5"/><rect x="365.8" y="245.4" width="15" height="15" fill="none" fill-opacity="0.85"/><path d="M365.8 260.4V245.4H380.8" fill="none" stroke="#c89860" stroke-width="1.5"/><path d="M380.8 245.4V260.4H365.8" fill="none" stroke="#c89860" stroke-width="1.5"/><rect x="426.1" y="255.9" width="15" height="15" fill="none" fill-opacity="0.85"/><path d="M426.1 270.9V255.9H441.1" fill="none" stroke="#c89860" stroke-width="1.5"/><path d="M441.1 255.9V270.9H426.1" fill="none" stroke="#c89860" stroke-width="1.5"/><rect x="449.7" y="277.1" width="15" height="15" fill="none" fill-opacity="0.85"/><path d="M449.7 292.1V277.1H464.7" fill="none" stroke="#c89860" stroke-width="1.5"/><path d="M464.7 277.1V292.1H449.7" fill="none" stroke="#c89860" stroke-width="1.5"/><rect x="481.7" y="295.9" width="15" height="15" fill="none" fill-opacity="0.85"/><path d="M481.7 310.9V295.9H496.7" fill="none" stroke="#c89860" stroke-width="1.5"/><path d="M496.7 295.9V310.9H481.7" fill="none" stroke="#c89860" stroke-width="1.5"/><rect x="332.2" y="287.6" width="15" height="15" fill="none" fill-opacity="0.85"/><path d="M332.2 302.6V287.6H347.2" fill="none" stroke="#c89860" stroke-width="1.5"/><path d="M347.2 287.6V302.6H332.2" fill="none" stroke="#c89860" stroke-width="1.5"/><rect x="268.3" y="324.3" width="15" height="15" fill="none" fill-opacity="0.85"/><path d="M268.3 339.3V324.3H283.3" fill="none" stroke="#c89860" stroke-width="1.5"/><path d="M283.3 324.3V339.3H268.3" fill="none" stroke="#c89860" stroke-width="1.5"/><rect x="370.3" y="325.9" width="15" height="15" fill="none" fill-opacity="0.85"/><path d="M370.3 340.9V325.9H385.3" fill="none" stroke="#c89860" stroke-width="1.5"/><path d="M385.3 325.9V340.9H370.3" fill="none" stroke="#c89860" stroke-width="1.5"/><rect x="382.5" y="323.2" width="15" height="15" fill="none" fill-opacity="0.85"/><path d="M382.5 338.2V323.2H397.5" fill="none" stroke="#c89860" stroke-width="1.5"/><path d="M397.5 323.2V338.2H382.5" fill="none" stroke="#c89860" stroke-width="1.5"/><rect x="436.7" y="352.1" width="15" height="15" fill="none" fill-opacity="0.85"/><path d="M436.7 367.1V352.1H451.7" fill="none" stroke="#c89860" stroke-width="1.5"/><path d="M451.7 352.1V367.1H436.7" fill="none" stroke="#c89860" stroke-width="1.5"/><rect x="221.9" y="379.8" width="15" height="15" fill="none" fill-opacity="0.85"/><path d="M221.9 394.8V379.8H236.9" fill="none" stroke="#c89860" stroke-width="1.5"/><path d="M236.9 379.8V394.8H221.9" fill="none" stroke="#c89860" stroke-width="1.5"/><rect x="257.2" y="380.9" width="15" height="15" fill="none" fill-opacity="0.85"/><path d="M257.2 395.9V380.9H272.2" fill="none" stroke="#c89860" stroke-width="1.5"/><path d="M272.2 380.9V395.9H257.2" fill="none" stroke="#c89860" stroke-width="1.5"/><rect x="275.3" y="389.0" width="15" height="15" fill="none" fill-opacity="0.85"/><path d="M275.3 404.0V389.0H290.3" fill="none" stroke="#c89860" stroke-width="1.5"/><path d="M290.3 389.0V404.0H275.3" fill="none" stroke="#c89860" stroke-width="1.5"/><rect x="291.1" y="400.7" width="15" height="15" fill="none" fill-opacity="0.85"/><path d="M291.1 415.7V400.7H306.1" fill="none" stroke="#c89860" stroke-width="1.5"/><path d="M306.1 400.7V415.7H291.1" fill="none" stroke="#c89860" stroke-width="1.5"/><rect x="230.5" y="421.8" width="15" height="15" fill="none" fill-opacity="0.85"/><path d="M230.5 436.8V421.8H245.5" fill="none" stroke="#c89860" stroke-width="1.5"/><path d="M245.5 421.8V436.8H230.5" fill="none" stroke="#c89860" stroke-width="1.5"/><rect x="366.9" y="389.8" width="15" height="15" fill="none" fill-opacity="0.85"/><path d="M366.9 404.8V389.8H381.9" fill="none" stroke="#c89860" stroke-width="1.5"/><path d="M381.9 389.8V404.8H366.9" fill="none" stroke="#c89860" stroke-width="1.5"/><rect x="212.2" y="447.3" width="15" height="15" fill="none" fill-opacity="0.85"/><path d="M212.2 462.3V447.3H227.2" fill="none" stroke="#c89860" stroke-width="1.5"/><path d="M227.2 447.3V462.3H212.2" fill="none" stroke="#c89860" stroke-width="1.5"/><rect x="500.3" y="347.9" width="15" height="15" fill="none" fill-opacity="0.85"/><path d="M500.3 362.9V347.9H515.3" fill="none" stroke="#c89860" stroke-width="1.5"/><path d="M515.3 347.9V362.9H500.3" fill="none" stroke="#c89860" stroke-width="1.5"/><circle cx="310.6" cy="253.8" r="5.5" fill="url(#mw)" stroke="#111" stroke-width="1" filter="url(#sh)"/><circle cx="373.3" cy="251.9" r="5.5" fill="url(#mw)" stroke="#111" stroke-width="1" filter="url(#sh)"/><circle cx="433.6" cy="262.4" r="5.5" fill="url(#mw)" stroke="#111" stroke-width="1" filter="url(#sh)"/><circle cx="457.2" cy="283.6" r="5.5" fill="url(#mw)" stroke="#111" stroke-width="1" filter="url(#sh)"/><circle cx="489.2" cy="302.4" r="5.5" fill="url(#mw)" stroke="#111" stroke-width="1" filter="url(#sh)"/><circle cx="339.7" cy="294.1" r="5.5" fill="url(#mw)" stroke="#111" stroke-width="1" filter="url(#sh)"/><circle cx="275.8" cy="330.8" r="5.5" fill="url(#mw)" stroke="#111" stroke-width="1" filter="url(#sh)"/><circle cx="377.8" cy="332.4" r="5.5" fill="url(#mw)" stroke="#111" stroke-width="1" filter="url(#sh)"/><circle cx="390.0" cy="329.7" r="5.5" fill="url(#mw)" stroke="#111" stroke-width="1" filter="url(#sh)"/><circle cx="444.2" cy="358.6" r="5.5" fill="url(#mw)" stroke="#111" stroke-width="1" filter="url(#sh)"/><circle cx="229.4" cy="386.3" r="5.5" fill="url(#mw)" stroke="#111" stroke-width="1" filter="url(#sh)"/><circle cx="264.7" cy="387.4" r="5.5" fill="url(#mw)" stroke="#111" stroke-width="1" filter="url(#sh)"/><circle cx="282.8" cy="395.5" r="5.5" fill="url(#mw)" stroke="#111" stroke-width="1" filter="url(#sh)"/><circle cx="298.6" cy="407.2" r="5.5" fill="url(#mw)" stroke="#111" stroke-width="1" filter="url(#sh)"/><circle cx="238.0" cy="428.3" r="5.5" fill="url(#mw)" stroke="#111" stroke-width="1" filter="url(#sh)"/><circle cx="374.4" cy="396.3" r="5.5" fill="url(#mw)" stroke="#111" stroke-width="1" filter="url(#sh)"/><circle cx="219.7" cy="453.8" r="5.5" fill="url(#mw)" stroke="#111" stroke-width="1" filter="url(#sh)"/><circle cx="507.8" cy="354.4" r="5.5" fill="url(#mw)" stroke="#111" stroke-width="1" filter="url(#sh)"/><circle cx="335.8" cy="349.1" r="5.5" fill="url(#mw)" stroke="#111" stroke-width="1" filter="url(#sh)"/><rect x="300.8" y="189.9" width="14" height="14" fill="#30d030" fill-opacity="0.85"/><path d="M300.8 203.9V189.9H314.8" fill="none" stroke="#102080" stroke-width="1.5"/><path d="M314.8 189.9V203.9H300.8" fill="none" stroke="#e01040" stroke-width="1.5"/><rect x="303.6" y="228.8" width="14" height="14" fill="#30d030" fill-opacity="0.85"/><path d="M303.6 242.8V228.8H317.6" fill="none" stroke="#102080" stroke-width="1.5"/><path d="M317.6 228.8V242.8H303.6" fill="none" stroke="#e01040" stroke-width="1.5"/><rect x="306.3" y="267.7" width="14" height="14" fill="#30d030" fill-opacity="0.85"/><path d="M306.3 281.7V267.7H320.3" fill="none" stroke="#102080" stroke-width="1.5"/><path d="M320.3 267.7V281.7H306.3" fill="none" stroke="#e01040" stroke-width="1.5"/><rect x="309.1" y="303.8" width="14" height="14" fill="#30d030" fill-opacity="0.85"/><path d="M309.1 317.8V303.8H323.1" fill="none" stroke="#102080" stroke-width="1.5"/><path d="M323.1 303.8V317.8H309.1" fill="none" stroke="#e01040" stroke-width="1.5"/><circle cx="305.8" cy="184.4" r="5.8" fill="url(#mg)" stroke="#111" stroke-width="1" filter="url(#sh)"/><circle cx="306.3" cy="185.4" r="0.9" fill="#000"/><circle cx="308.6" cy="228.8" r="5.8" fill="url(#mg)" stroke="#111" stroke-width="1" filter="url(#sh)"/><circle cx="309.1" cy="229.8" r="0.9" fill="#000"/><circle cx="312.2" cy="269.1" r="5.8" fill="url(#mg)" stroke="#111" stroke-width="1" filter="url(#sh)"/><circle cx="312.7" cy="270.1" r="0.9" fill="#000"/><circle cx="316.1" cy="307.4" r="5.8" fill="url(#mg)" stroke="#111" stroke-width="1" filter="url(#sh)"/><circle cx="316.6" cy="308.4" r="0.9" fill="#000"/><rect x="398.8" y="243.5" width="14" height="14" fill="#f0e000" fill-opacity="0.85"/><path d="M398.8 257.5V243.5H412.8" fill="none" stroke="#102080" stroke-width="1.5"/><path d="M412.8 243.5V257.5H398.8" fill="none" stroke="#e01040" stroke-width="1.5"/><rect x="377.4" y="268.2" width="14" height="14" fill="#f0e000" fill-opacity="0.85"/><path d="M377.4 282.2V268.2H391.4" fill="none" stroke="#102080" stroke-width="1.5"/><path d="M391.4 268.2V282.2H377.4" fill="none" stroke="#e01040" stroke-width="1.5"/><rect x="355.2" y="293.2" width="14" height="14" fill="#f0e000" fill-opacity="0.85"/><path d="M355.2 307.2V293.2H369.2" fill="none" stroke="#102080" stroke-width="1.5"/><path d="M369.2 293.2V307.2H355.2" fill="none" stroke="#e01040" stroke-width="1.5"/><rect x="333.0" y="317.7" width="14" height="14" fill="#f0e000" fill-opacity="0.85"/><path d="M333.0 331.7V317.7H347.0" fill="none" stroke="#102080" stroke-width="1.5"/><path d="M347.0 317.7V331.7H333.0" fill="none" stroke="#e01040" stroke-width="1.5"/><circle cx="409.4" cy="243.6" r="5.8" fill="url(#my)" stroke="#111" stroke-width="1" filter="url(#sh)"/><circle cx="409.9" cy="244.6" r="0.9" fill="#000"/><circle cx="387.2" cy="271.9" r="5.8" fill="url(#my)" stroke="#111" stroke-width="1" filter="url(#sh)"/><circle cx="387.7" cy="272.9" r="0.9" fill="#000"/><circle cx="365.6" cy="296.9" r="5.8" fill="url(#my)" stroke="#111" stroke-width="1" filter="url(#sh)"/><circle cx="366.1" cy="297.9" r="0.9" fill="#000"/><circle cx="342.8" cy="324.1" r="5.8" fill="url(#my)" stroke="#111" stroke-width="1" filter="url(#sh)"/><circle cx="343.3" cy="325.1" r="0.9" fill="#000"/><rect x="239.0" y="343.0" width="14" height="14" fill="#40d8e8" fill-opacity="0.85"/><path d="M239.0 357.0V343.0H253.0" fill="none" stroke="#102080" stroke-width="1.5"/><path d="M253.0 343.0V357.0H239.0" fill="none" stroke="#e01040" stroke-width="1.5"/><rect x="257.7" y="343.0" width="14" height="14" fill="#40d8e8" fill-opacity="0.85"/><path d="M257.7 357.0V343.0H271.7" fill="none" stroke="#102080" stroke-width="1.5"/><path d="M271.7 343.0V357.0H257.7" fill="none" stroke="#e01040" stroke-width="1.5"/><rect x="275.8" y="343.0" width="14" height="14" fill="#40d8e8" fill-opacity="0.85"/><path d="M275.8 357.0V343.0H289.8" fill="none" stroke="#102080" stroke-width="1.5"/><path d="M289.8 343.0V357.0H275.8" fill="none" stroke="#e01040" stroke-width="1.5"/><rect x="293.3" y="343.0" width="14" height="14" fill="#40d8e8" fill-opacity="0.85"/><path d="M293.3 357.0V343.0H307.3" fill="none" stroke="#102080" stroke-width="1.5"/><path d="M307.3 343.0V357.0H293.3" fill="none" stroke="#e01040" stroke-width="1.5"/><circle cx="242.5" cy="352.0" r="5.8" fill="url(#mc)" stroke="#111" stroke-width="1" filter="url(#sh)"/><circle cx="243.0" cy="353.0" r="0.9" fill="#000"/><circle cx="262.0" cy="352.0" r="5.8" fill="url(#mc)" stroke="#111" stroke-width="1" filter="url(#sh)"/><circle cx="262.5" cy="353.0" r="0.9" fill="#000"/><circle cx="280.8" cy="352.0" r="5.8" fill="url(#mc)" stroke="#111" stroke-width="1" filter="url(#sh)"/><circle cx="281.3" cy="353.0" r="0.9" fill="#000"/><circle cx="300.8" cy="352.0" r="5.8" fill="url(#mc)" stroke="#111" stroke-width="1" filter="url(#sh)"/><circle cx="301.3" cy="353.0" r="0.9" fill="#000"/><rect x="314.0" y="366.0" width="14" height="14" fill="#f000f0" fill-opacity="0.85"/><path d="M314.0 380.0V366.0H328.0" fill="none" stroke="#102080" stroke-width="1.5"/><path d="M328.0 366.0V380.0H314.0" fill="none" stroke="#e01040" stroke-width="1.5"/><rect x="315.5" y="391.0" width="14" height="14" fill="#f000f0" fill-opacity="0.85"/><path d="M315.5 405.0V391.0H329.5" fill="none" stroke="#102080" stroke-width="1.5"/><path d="M329.5 391.0V405.0H315.5" fill="none" stroke="#e01040" stroke-width="1.5"/><rect x="315.5" y="416.0" width="14" height="14" fill="#f000f0" fill-opacity="0.85"/><path d="M315.5 430.0V416.0H329.5" fill="none" stroke="#102080" stroke-width="1.5"/><path d="M329.5 416.0V430.0H315.5" fill="none" stroke="#e01040" stroke-width="1.5"/><rect x="318.3" y="441.0" width="14" height="14" fill="#f000f0" fill-opacity="0.85"/><path d="M318.3 455.0V441.0H332.3" fill="none" stroke="#102080" stroke-width="1.5"/><path d="M332.3 441.0V455.0H318.3" fill="none" stroke="#e01040" stroke-width="1.5"/><circle cx="322.5" cy="374.1" r="5.8" fill="url(#mm)" stroke="#111" stroke-width="1" filter="url(#sh)"/><circle cx="323.0" cy="375.1" r="0.9" fill="#000"/><circle cx="323.9" cy="401.0" r="5.8" fill="url(#mm)" stroke="#111" stroke-width="1" filter="url(#sh)"/><circle cx="324.4" cy="402.0" r="0.9" fill="#000"/><circle cx="326.7" cy="425.5" r="5.8" fill="url(#mm)" stroke="#111" stroke-width="1" filter="url(#sh)"/><circle cx="327.2" cy="426.5" r="0.9" fill="#000"/><circle cx="329.4" cy="448.3" r="5.8" fill="url(#mm)" stroke="#111" stroke-width="1" filter="url(#sh)"/><circle cx="329.9" cy="449.3" r="0.9" fill="#000"/><rect x="378.0" y="342.0" width="14" height="14" fill="#f01010" fill-opacity="0.85"/><path d="M378.0 356.0V342.0H392.0" fill="none" stroke="#102080" stroke-width="1.5"/><path d="M392.0 342.0V356.0H378.0" fill="none" stroke="#e01040" stroke-width="1.5"/><rect x="443.7" y="341.4" width="14" height="14" fill="#f01010" fill-opacity="0.85"/><path d="M443.7 355.4V341.4H457.7" fill="none" stroke="#102080" stroke-width="1.5"/><path d="M457.7 341.4V355.4H443.7" fill="none" stroke="#e01040" stroke-width="1.5"/><rect x="512.5" y="341.4" width="14" height="14" fill="#f01010" fill-opacity="0.85"/><path d="M512.5 355.4V341.4H526.5" fill="none" stroke="#102080" stroke-width="1.5"/><path d="M526.5 341.4V355.4H512.5" fill="none" stroke="#e01040" stroke-width="1.5"/><rect x="580.0" y="342.0" width="14" height="14" fill="#f01010" fill-opacity="0.85"/><path d="M580.0 356.0V342.0H594.0" fill="none" stroke="#102080" stroke-width="1.5"/><path d="M594.0 342.0V356.0H580.0" fill="none" stroke="#e01040" stroke-width="1.5"/><circle cx="391.5" cy="348.4" r="6" fill="url(#mr)" stroke="#111" stroke-width="1" filter="url(#sh)"/><circle cx="392.0" cy="349.4" r="0.9" fill="#000"/><circle cx="458.1" cy="349.8" r="6" fill="url(#mr)" stroke="#111" stroke-width="1" filter="url(#sh)"/><circle cx="458.6" cy="350.8" r="0.9" fill="#000"/><circle cx="521.2" cy="350.7" r="6" fill="url(#mr)" stroke="#111" stroke-width="1" filter="url(#sh)"/><circle cx="521.7" cy="351.7" r="0.9" fill="#000"/><circle cx="594.4" cy="349.8" r="6" fill="url(#mr)" stroke="#111" stroke-width="1" filter="url(#sh)"/><circle cx="594.9" cy="350.8" r="0.9" fill="#000"/><rect x="177.2" y="494.0" width="14" height="14" fill="#3030f0" fill-opacity="0.85"/><path d="M177.2 508.0V494.0H191.2" fill="none" stroke="#102080" stroke-width="1.5"/><path d="M191.2 494.0V508.0H177.2" fill="none" stroke="#e01040" stroke-width="1.5"/><rect x="211.2" y="454.0" width="14" height="14" fill="#3030f0" fill-opacity="0.85"/><path d="M211.2 468.0V454.0H225.2" fill="none" stroke="#102080" stroke-width="1.5"/><path d="M225.2 454.0V468.0H211.2" fill="none" stroke="#e01040" stroke-width="1.5"/><rect x="243.8" y="418.5" width="14" height="14" fill="#3030f0" fill-opacity="0.85"/><path d="M243.8 432.5V418.5H257.8" fill="none" stroke="#102080" stroke-width="1.5"/><path d="M257.8 418.5V432.5H243.8" fill="none" stroke="#e01040" stroke-width="1.5"/><rect x="276.4" y="384.4" width="14" height="14" fill="#3030f0" fill-opacity="0.85"/><path d="M276.4 398.4V384.4H290.4" fill="none" stroke="#102080" stroke-width="1.5"/><path d="M290.4 384.4V398.4H276.4" fill="none" stroke="#e01040" stroke-width="1.5"/><circle cx="192.4" cy="499.6" r="6" fill="url(#mb)" stroke="#111" stroke-width="1" filter="url(#sh)"/><circle cx="255.3" cy="420.4" r="6" fill="url(#mb)" stroke="#111" stroke-width="1" filter="url(#sh)"/><circle cx="286.4" cy="384.0" r="6" fill="url(#mb)" stroke="#111" stroke-width="1" filter="url(#sh)"/><circle cx="219.7" cy="455.0" r="5.5" fill="url(#mw)" stroke="#111" stroke-width="1" filter="url(#sh)"/><circle cx="316.0" cy="352.0" r="8" fill="#111" filter="url(#sh)"/><circle cx="318.5" cy="350.0" r="7" fill="url(#mw)" stroke="#000" stroke-width="1.5"/><circle cx="318.5" cy="350.0" r="5" fill="#c8c8f0"/><text x="396.0" y="299.0" font-size="12.5" fill="#111">3000</text><text x="439.0" y="300.0" font-size="12.5" fill="#111">2850</text><text x="346.0" y="315.0" font-size="12.5" fill="#111">4000</text><text x="306.0" y="335.0" font-size="12.5" fill="#111">5500</text><text x="288.0" y="348.0" font-size="12.5" fill="#111">D65</text><text x="267.0" y="364.0" font-size="12.5" fill="#111">9500</text><text x="427.0" y="321.0" font-size="12.5" fill="#111">A</text><text x="352.0" y="353.0" font-size="12.5" fill="#111">B</text><path d="M137 63L154 41" stroke="#b0b0b0" stroke-width="0.8"/><text x="153" y="45" font-size="11" fill="#e8e8e8">520 nm</text><path d="M261 114L278 92" stroke="#b0b0b0" stroke-width="0.8"/><text x="276" y="96" font-size="11" fill="#e8e8e8">540 nm</text><path d="M375 186L390 166" stroke="#b0b0b0" stroke-width="0.8"/><text x="388" y="170" font-size="11" fill="#e8e8e8">560 nm</text><path d="M456 242L471 220" stroke="#b0b0b0" stroke-width="0.8"/><text x="469" y="224" font-size="11" fill="#e8e8e8">580 nm</text><path d="M510 280L525 258" stroke="#b0b0b0" stroke-width="0.8"/><text x="523" y="262" font-size="11" fill="#e8e8e8">600 nm</text><path d="M562 312L577 293" stroke="#b0b0b0" stroke-width="0.8"/><text x="575" y="297" font-size="11" fill="#e8e8e8">620 nm</text><path d="M617 348L633 331" stroke="#b0b0b0" stroke-width="0.8"/><text x="631" y="335" font-size="11" fill="#e8e8e8">640 nm</text><path d="M642 366L657 348" stroke="#b0b0b0" stroke-width="0.8"/><text x="655" y="352" font-size="11" fill="#e8e8e8">660 nm</text><path d="M651 375L665 355" stroke="#b0b0b0" stroke-width="0.8"/><text x="663" y="359" font-size="11" fill="#e8e8e8">680 nm</text><path d="M65 198L50 206" stroke="#b0b0b0" stroke-width="0.8"/><text x="20" y="218" font-size="11" fill="#e8e8e8">500 nm</text><path d="M127 433L112 438" stroke="#b0b0b0" stroke-width="0.8"/><text x="84" y="451" font-size="11" fill="#e8e8e8">480 nm</text><path d="M163 499L148 504" stroke="#b0b0b0" stroke-width="0.8"/><text x="119" y="514" font-size="11" fill="#e8e8e8">460 nm</text><path d="M175 513L160 519" stroke="#b0b0b0" stroke-width="0.8"/><text x="131" y="529" font-size="11" fill="#e8e8e8">440 nm</text><path d="M183 521L168 526" stroke="#b0b0b0" stroke-width="0.8"/><text x="139" y="536" font-size="11" fill="#e8e8e8">420 nm</text><text x="3" y="474.8" font-size="13.5" fill="#f0f0f0">0.1</text><text x="3" y="418.5" font-size="13.5" fill="#f0f0f0">0.2</text><text x="3" y="362.2" font-size="13.5" fill="#f0f0f0">0.3</text><text x="3" y="306.0" font-size="13.5" fill="#f0f0f0">0.4</text><text x="3" y="249.8" font-size="13.5" fill="#f0f0f0">0.5</text><text x="3" y="193.5" font-size="13.5" fill="#f0f0f0">0.6</text><text x="3" y="137.2" font-size="13.5" fill="#f0f0f0">0.7</text><text x="3" y="81.0" font-size="13.5" fill="#f0f0f0">0.8</text><text x="145.1" y="559" font-size="13.5" fill="#f0f0f0">0.1</text><text x="227.4" y="559" font-size="13.5" fill="#f0f0f0">0.2</text><text x="309.7" y="559" font-size="13.5" fill="#f0f0f0">0.3</text><text x="392.0" y="559" font-size="13.5" fill="#f0f0f0">0.4</text><text x="474.3" y="559" font-size="13.5" fill="#f0f0f0">0.5</text><text x="556.6" y="559" font-size="13.5" fill="#f0f0f0">0.6</text><text x="638.9" y="559" font-size="13.5" fill="#f0f0f0">0.7</text><text x="575" y="502" font-family="Liberation Sans" font-weight="bold" font-size="16.1" fill="#3c3c3c">hcfr.sourceforge.net</text></svg>
</div><div class="a" style="left:0;top:1022px;width:1920px;height:20px;background:#f0f0f0"></div>
<div class="a" style="left:0;top:1020px;width:2px;height:22px;background:#7a7a7a"></div>
<div class="a" style="left:2px;top:1022px;width:1898px;height:1px;background:#fafafa"></div>
<div class="a" style="left:19px;top:1030px;width:1825px;height:2px;background:#7f7f7f"></div>
<div class="a" style="left:0;top:1039px;width:1920px;height:2px;background:#fafafa"></div>

<div class="a" style="left:0;top:1042px;width:1920px;height:1px;background:#000"></div>
<div class="a" style="left:0;top:1043px;width:1920px;height:18px;background:#f0f0f0"></div>
<svg class="ico" style="left:0;top:1042px" width="400" height="19" viewBox="0 0 400 19">
<rect x="0.5" y="0.5" width="53" height="18" fill="#f0f0f0" stroke="#000"/>
<path d="M17.5 0.5v18M35.5 0.5v18" stroke="#000"/>
<path d="M4.5 5.5l8 8M12.5 5.5l-8 8" stroke="#000" stroke-width="1.2"/>
<path d="M28 5.5v8l-4-4z" fill="#000"/><path d="M42 5.5v8l4-4z" fill="#000"/>
<path d="M119.4 0.5l8.7 18h65l8.7-18" fill="#f0f0f0" stroke="#000"/>
<path d="M193.1 0.5l8.7 18h69.5l8.7-18" fill="#f0f0f0" stroke="#000"/>
<path d="M271.25 0.5l8.7 18h95l8.7-18" fill="#f0f0f0" stroke="#000"/>
<path d="M54.4 0.5l8.7 18h56.3l8.7-18" fill="#fff" stroke="#000"/>
</svg>
<div class="t" style="left:66.30px;top:1046.18px;font-size:11px;font-weight:bold;transform:scaleX(0.9827);transform-origin:0 0">Measures</div>
<div class="t" style="left:134.24px;top:1046.18px;font-size:11px;transform:scaleX(0.8621);transform-origin:0 0">RGB Levels</div>
<div class="t" style="left:208.28px;top:1046.18px;font-size:11px;transform:scaleX(0.8589);transform-origin:0 0">CIE Diagram</div>
<div class="t" style="left:289.54px;top:1046.18px;font-size:11px;transform:scaleX(0.8412);transform-origin:0 0">Color temperature</div>
<svg class="ico" style="left:1750px;top:1044px" width="15" height="15" viewBox="0 0 15 15"><path d="M1 1h13v9l-3 4H4l-3-4z" fill="#6a6a10" stroke="#333" stroke-width="0.8"/><rect x="4" y="3" width="7" height="4" fill="#e03030"/><circle cx="5" cy="11" r="2" fill="#f0e040"/><circle cx="10" cy="11" r="2" fill="#f0e040"/></svg>
<div class="a" style="left:1846px;top:1044px;width:12px;height:12px;background:#fff;border:1px solid #333"></div>
<div class="t" style="left:1863.62px;top:1044.91px;font-size:12.5px;transform:scaleX(0.8765);transform-origin:0 0">Reference</div>
<div class="a" style="left:0;top:1061px;width:1920px;height:19px;background:#e9eff8"></div>
<div class="t" style="left:1.11px;top:1065.32px;font-size:12.9px;transform:scaleX(0.8621);transform-origin:0 0">Ready</div>
<div class="a" style="left:1742px;top:1062px;width:75px;height:18px;border:1px solid #aac0dc;border-bottom:none"></div>
<div class="a" style="left:1820px;top:1062px;width:28px;height:18px;border:1px solid #aac0dc;border-bottom:none"></div>
<div class="a" style="left:1851px;top:1062px;width:33px;height:18px;border:1px solid #aac0dc;border-bottom:none"></div>
<div class="a" style="left:1887px;top:1062px;width:33px;height:18px;border:1px solid #aac0dc;border-bottom:none"></div>
<div class="t" style="left:1821.94px;top:1065.32px;font-size:12.9px;transform:scaleX(0.8624);transform-origin:0 0">CAP</div>
<div class="t" style="left:1852.74px;top:1065.32px;font-size:12.9px;transform:scaleX(0.9804);transform-origin:0 0">NUM</div>
</body></html>
